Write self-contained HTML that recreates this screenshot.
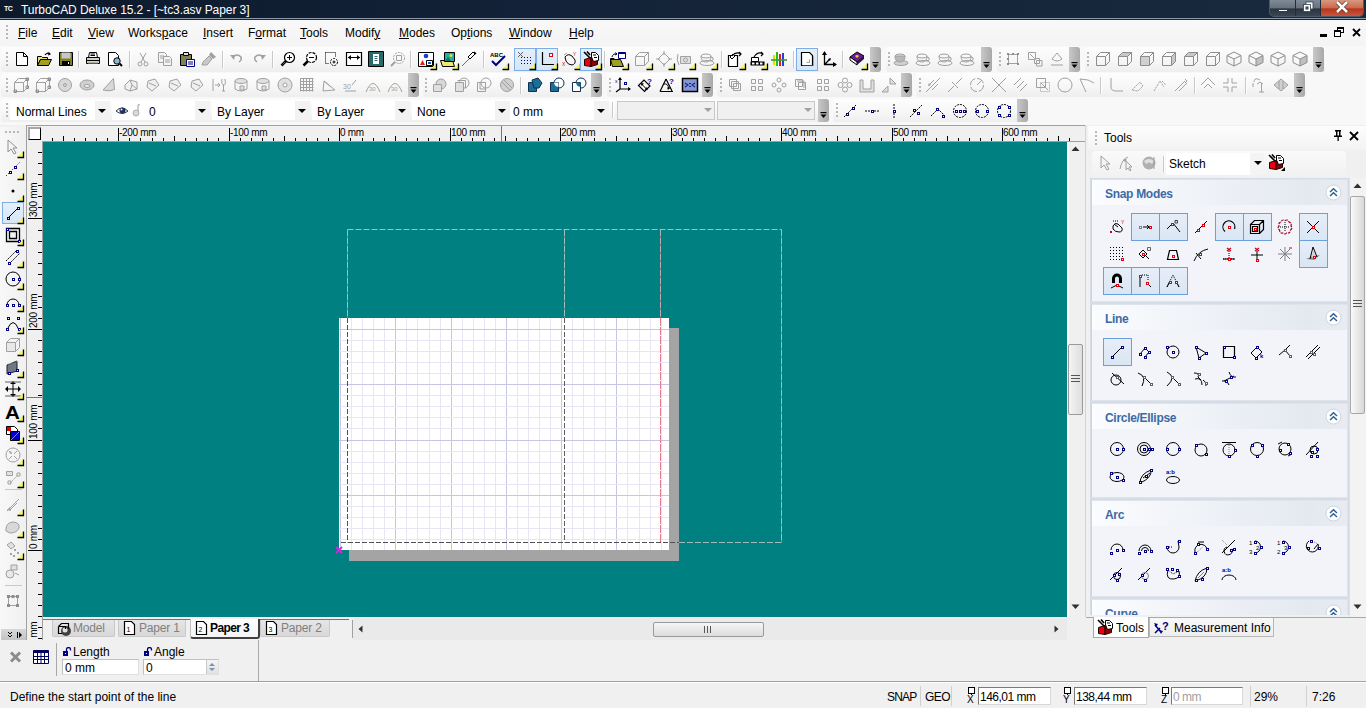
<!DOCTYPE html><html><head><meta charset="utf-8"><style>
html,body{margin:0;padding:0;width:1366px;height:708px;overflow:hidden;background:#f0f0f0;font-family:"Liberation Sans", sans-serif;}
div,svg{box-sizing:border-box;}
u{text-decoration:underline;text-underline-offset:1px;text-decoration-thickness:1px;}
</style></head><body>
<div style="position:absolute;left:0px;top:0px;width:1366px;height:18px;background:linear-gradient(90deg,#0d1a2c 0%,#132238 40%,#16263a 70%,#1a2a3e 100%);"></div>
<div style="position:absolute;left:0px;top:18px;width:1366px;height:1px;background:#8a98a8;"></div>
<div style="position:absolute;left:0px;top:19px;width:1366px;height:1px;background:#1c2633;"></div>
<div style="position:absolute;left:4px;top:5px;font-size:7px;line-height:9px;color:#fff;white-space:nowrap;letter-spacing:-0.5px;line-height:8px;"><b>TC</b></div>
<div style="position:absolute;left:21px;top:3px;font-size:12px;line-height:14px;color:#fff;white-space:nowrap;line-height:15px;letter-spacing:-0.07px;">TurboCAD Deluxe 15.2 - [~tc3.asv Paper 3]</div>
<div style="position:absolute;left:1269px;top:0px;width:95px;height:17px;border:1px solid #4a5868;border-top:none;border-radius:0 0 5px 5px;background:#202c3a;"></div>
<div style="position:absolute;left:1270px;top:0px;width:25px;height:16px;background:linear-gradient(#7e8a96 0%,#66737f 50%,#2a3440 55%,#3a4654 100%);border-radius:0 0 0 4px;"></div>
<div style="position:absolute;left:1296px;top:0px;width:24px;height:16px;background:linear-gradient(#7e8a96 0%,#66737f 50%,#2a3440 55%,#3a4654 100%);"></div>
<div style="position:absolute;left:1321px;top:0px;width:42px;height:16px;background:linear-gradient(#d9977f 0%,#c86a4e 50%,#b8341a 55%,#c6583e 100%);border-radius:0 0 4px 0;"></div>
<div style="position:absolute;left:1278px;top:9px;width:10px;height:3px;background:#fff;border:1px solid #303840;"></div>
<svg style="position:absolute;left:1302px;top:1px;" width="12" height="12" viewBox="0 0 12 12"><rect x="4" y="1" width="7" height="7" fill="#fff" stroke="#304050" stroke-width="0.8"/><rect x="1.5" y="3.5" width="7" height="7" fill="#fff" stroke="#304050" stroke-width="0.8"/><rect x="3.5" y="5.5" width="3" height="3" fill="#3a4654"/></svg>
<svg style="position:absolute;left:1335px;top:1px;" width="14" height="12" viewBox="0 0 14 12"><path d="M2 1 L12 11 M12 1 L2 11" stroke="#5a3020" stroke-width="4"/><path d="M2 1 L12 11 M12 1 L2 11" stroke="#fff" stroke-width="2.6"/></svg>
<div style="position:absolute;left:0px;top:20px;width:1366px;height:26px;background:linear-gradient(#f8f8f8,#f4f4f4);"></div>
<svg style="position:absolute;left:6px;top:25px;" width="2" height="16" viewBox="0 0 2 16"><rect x="0" y="0" width="2" height="2" fill="#b8b8b8"/><rect x="0" y="4" width="2" height="2" fill="#b8b8b8"/><rect x="0" y="8" width="2" height="2" fill="#b8b8b8"/><rect x="0" y="12" width="2" height="2" fill="#b8b8b8"/></svg>
<div style="position:absolute;left:18px;top:26px;font-size:12px;line-height:14px;color:#000;white-space:nowrap;line-height:14px;"><u>F</u>ile</div>
<div style="position:absolute;left:52px;top:26px;font-size:12px;line-height:14px;color:#000;white-space:nowrap;line-height:14px;"><u>E</u>dit</div>
<div style="position:absolute;left:88px;top:26px;font-size:12px;line-height:14px;color:#000;white-space:nowrap;line-height:14px;"><u>V</u>iew</div>
<div style="position:absolute;left:128px;top:26px;font-size:12px;line-height:14px;color:#000;white-space:nowrap;line-height:14px;">Works<u>p</u>ace</div>
<div style="position:absolute;left:203px;top:26px;font-size:12px;line-height:14px;color:#000;white-space:nowrap;line-height:14px;"><u>I</u>nsert</div>
<div style="position:absolute;left:248px;top:26px;font-size:12px;line-height:14px;color:#000;white-space:nowrap;line-height:14px;">F<u>o</u>rmat</div>
<div style="position:absolute;left:300px;top:26px;font-size:12px;line-height:14px;color:#000;white-space:nowrap;line-height:14px;"><u>T</u>ools</div>
<div style="position:absolute;left:345px;top:26px;font-size:12px;line-height:14px;color:#000;white-space:nowrap;line-height:14px;">Modif<u>y</u></div>
<div style="position:absolute;left:399px;top:26px;font-size:12px;line-height:14px;color:#000;white-space:nowrap;line-height:14px;"><u>M</u>odes</div>
<div style="position:absolute;left:451px;top:26px;font-size:12px;line-height:14px;color:#000;white-space:nowrap;line-height:14px;">Op<u>t</u>ions</div>
<div style="position:absolute;left:509px;top:26px;font-size:12px;line-height:14px;color:#000;white-space:nowrap;line-height:14px;"><u>W</u>indow</div>
<div style="position:absolute;left:569px;top:26px;font-size:12px;line-height:14px;color:#000;white-space:nowrap;line-height:14px;"><u>H</u>elp</div>
<div style="position:absolute;left:1320px;top:34px;width:7px;height:3px;background:#000;"></div>
<svg style="position:absolute;left:1334px;top:27px;" width="10" height="10" viewBox="0 0 10 10"><rect x="3.5" y="0.5" width="6" height="5" fill="none" stroke="#000"/><rect x="3.5" y="0.5" width="6" height="1.5" fill="#000"/><rect x="0.5" y="3.5" width="6" height="6" fill="#fff" stroke="#000"/><rect x="0.5" y="3.5" width="6" height="1.5" fill="#000"/></svg>
<svg style="position:absolute;left:1352px;top:28px;" width="9" height="9" viewBox="0 0 9 9"><path d="M1 1 L8 8 M8 1 L1 8" stroke="#000" stroke-width="1.8"/></svg>
<div style="position:absolute;left:0px;top:46px;width:1366px;height:79px;background:#f8f8f8;"></div>
<div style="position:absolute;left:1px;top:47px;width:868px;height:25px;background:linear-gradient(#fdfdfd,#f6f6f6 60%,#eeeeee);border-radius:3px;"></div>
<div style="position:absolute;left:870px;top:47px;width:11px;height:25px;background:linear-gradient(90deg,#c8c8c8,#a8a8a8);border-radius:0 3px 3px 0;"></div>
<svg style="position:absolute;left:872px;top:62px;" width="7" height="7" viewBox="0 0 7 7"><rect x="0.5" y="0" width="6" height="1.2" fill="#000"/><path d="M0.5 2.5 L6.5 2.5 L3.5 6 Z" fill="#000"/></svg>
<div style="position:absolute;left:886px;top:47px;width:106px;height:25px;background:linear-gradient(#fdfdfd,#f6f6f6 60%,#eeeeee);border-radius:3px;"></div>
<div style="position:absolute;left:981px;top:47px;width:11px;height:25px;background:linear-gradient(90deg,#c8c8c8,#a8a8a8);border-radius:0 3px 3px 0;"></div>
<svg style="position:absolute;left:983px;top:62px;" width="7" height="7" viewBox="0 0 7 7"><rect x="0.5" y="0" width="6" height="1.2" fill="#000"/><path d="M0.5 2.5 L6.5 2.5 L3.5 6 Z" fill="#000"/></svg>
<div style="position:absolute;left:997px;top:47px;width:84px;height:25px;background:linear-gradient(#fdfdfd,#f6f6f6 60%,#eeeeee);border-radius:3px;"></div>
<div style="position:absolute;left:1069px;top:47px;width:11px;height:25px;background:linear-gradient(90deg,#c8c8c8,#a8a8a8);border-radius:0 3px 3px 0;"></div>
<svg style="position:absolute;left:1071px;top:62px;" width="7" height="7" viewBox="0 0 7 7"><rect x="0.5" y="0" width="6" height="1.2" fill="#000"/><path d="M0.5 2.5 L6.5 2.5 L3.5 6 Z" fill="#000"/></svg>
<div style="position:absolute;left:1085px;top:47px;width:240px;height:25px;background:linear-gradient(#fdfdfd,#f6f6f6 60%,#eeeeee);border-radius:3px;"></div>
<div style="position:absolute;left:1313px;top:47px;width:11px;height:25px;background:linear-gradient(90deg,#c8c8c8,#a8a8a8);border-radius:0 3px 3px 0;"></div>
<svg style="position:absolute;left:1315px;top:62px;" width="7" height="7" viewBox="0 0 7 7"><rect x="0.5" y="0" width="6" height="1.2" fill="#000"/><path d="M0.5 2.5 L6.5 2.5 L3.5 6 Z" fill="#000"/></svg>
<svg style="position:absolute;left:6px;top:52px;" width="2" height="16" viewBox="0 0 2 16"><rect x="0" y="0" width="2" height="2" fill="#b8b8b8"/><rect x="0" y="4" width="2" height="2" fill="#b8b8b8"/><rect x="0" y="8" width="2" height="2" fill="#b8b8b8"/><rect x="0" y="12" width="2" height="2" fill="#b8b8b8"/></svg>
<svg style="position:absolute;left:888px;top:52px;" width="2" height="16" viewBox="0 0 2 16"><rect x="0" y="0" width="2" height="2" fill="#b8b8b8"/><rect x="0" y="4" width="2" height="2" fill="#b8b8b8"/><rect x="0" y="8" width="2" height="2" fill="#b8b8b8"/><rect x="0" y="12" width="2" height="2" fill="#b8b8b8"/></svg>
<svg style="position:absolute;left:999px;top:52px;" width="2" height="16" viewBox="0 0 2 16"><rect x="0" y="0" width="2" height="2" fill="#b8b8b8"/><rect x="0" y="4" width="2" height="2" fill="#b8b8b8"/><rect x="0" y="8" width="2" height="2" fill="#b8b8b8"/><rect x="0" y="12" width="2" height="2" fill="#b8b8b8"/></svg>
<svg style="position:absolute;left:1087px;top:52px;" width="2" height="16" viewBox="0 0 2 16"><rect x="0" y="0" width="2" height="2" fill="#b8b8b8"/><rect x="0" y="4" width="2" height="2" fill="#b8b8b8"/><rect x="0" y="8" width="2" height="2" fill="#b8b8b8"/><rect x="0" y="12" width="2" height="2" fill="#b8b8b8"/></svg>
<div style="position:absolute;left:1px;top:73px;width:418px;height:24px;background:linear-gradient(#fdfdfd,#f6f6f6 60%,#eeeeee);border-radius:3px;"></div>
<div style="position:absolute;left:408px;top:73px;width:11px;height:24px;background:linear-gradient(90deg,#c8c8c8,#a8a8a8);border-radius:0 3px 3px 0;"></div>
<svg style="position:absolute;left:410px;top:87px;" width="7" height="7" viewBox="0 0 7 7"><rect x="0.5" y="0" width="6" height="1.2" fill="#000"/><path d="M0.5 2.5 L6.5 2.5 L3.5 6 Z" fill="#000"/></svg>
<div style="position:absolute;left:423px;top:73px;width:179px;height:24px;background:linear-gradient(#fdfdfd,#f6f6f6 60%,#eeeeee);border-radius:3px;"></div>
<div style="position:absolute;left:591px;top:73px;width:11px;height:24px;background:linear-gradient(90deg,#c8c8c8,#a8a8a8);border-radius:0 3px 3px 0;"></div>
<svg style="position:absolute;left:593px;top:87px;" width="7" height="7" viewBox="0 0 7 7"><rect x="0.5" y="0" width="6" height="1.2" fill="#000"/><path d="M0.5 2.5 L6.5 2.5 L3.5 6 Z" fill="#000"/></svg>
<div style="position:absolute;left:607px;top:73px;width:106px;height:24px;background:linear-gradient(#fdfdfd,#f6f6f6 60%,#eeeeee);border-radius:3px;"></div>
<div style="position:absolute;left:702px;top:73px;width:11px;height:24px;background:linear-gradient(90deg,#c8c8c8,#a8a8a8);border-radius:0 3px 3px 0;"></div>
<svg style="position:absolute;left:704px;top:87px;" width="7" height="7" viewBox="0 0 7 7"><rect x="0.5" y="0" width="6" height="1.2" fill="#000"/><path d="M0.5 2.5 L6.5 2.5 L3.5 6 Z" fill="#000"/></svg>
<div style="position:absolute;left:717px;top:73px;width:196px;height:24px;background:linear-gradient(#fdfdfd,#f6f6f6 60%,#eeeeee);border-radius:3px;"></div>
<div style="position:absolute;left:901px;top:73px;width:11px;height:24px;background:linear-gradient(90deg,#c8c8c8,#a8a8a8);border-radius:0 3px 3px 0;"></div>
<svg style="position:absolute;left:903px;top:87px;" width="7" height="7" viewBox="0 0 7 7"><rect x="0.5" y="0" width="6" height="1.2" fill="#000"/><path d="M0.5 2.5 L6.5 2.5 L3.5 6 Z" fill="#000"/></svg>
<div style="position:absolute;left:916px;top:73px;width:390px;height:24px;background:linear-gradient(#fdfdfd,#f6f6f6 60%,#eeeeee);border-radius:3px;"></div>
<div style="position:absolute;left:1294px;top:73px;width:11px;height:24px;background:linear-gradient(90deg,#c8c8c8,#a8a8a8);border-radius:0 3px 3px 0;"></div>
<svg style="position:absolute;left:1296px;top:87px;" width="7" height="7" viewBox="0 0 7 7"><rect x="0.5" y="0" width="6" height="1.2" fill="#000"/><path d="M0.5 2.5 L6.5 2.5 L3.5 6 Z" fill="#000"/></svg>
<svg style="position:absolute;left:6px;top:78px;" width="2" height="16" viewBox="0 0 2 16"><rect x="0" y="0" width="2" height="2" fill="#b8b8b8"/><rect x="0" y="4" width="2" height="2" fill="#b8b8b8"/><rect x="0" y="8" width="2" height="2" fill="#b8b8b8"/><rect x="0" y="12" width="2" height="2" fill="#b8b8b8"/></svg>
<svg style="position:absolute;left:425px;top:78px;" width="2" height="16" viewBox="0 0 2 16"><rect x="0" y="0" width="2" height="2" fill="#b8b8b8"/><rect x="0" y="4" width="2" height="2" fill="#b8b8b8"/><rect x="0" y="8" width="2" height="2" fill="#b8b8b8"/><rect x="0" y="12" width="2" height="2" fill="#b8b8b8"/></svg>
<svg style="position:absolute;left:609px;top:78px;" width="2" height="16" viewBox="0 0 2 16"><rect x="0" y="0" width="2" height="2" fill="#b8b8b8"/><rect x="0" y="4" width="2" height="2" fill="#b8b8b8"/><rect x="0" y="8" width="2" height="2" fill="#b8b8b8"/><rect x="0" y="12" width="2" height="2" fill="#b8b8b8"/></svg>
<svg style="position:absolute;left:720px;top:78px;" width="2" height="16" viewBox="0 0 2 16"><rect x="0" y="0" width="2" height="2" fill="#b8b8b8"/><rect x="0" y="4" width="2" height="2" fill="#b8b8b8"/><rect x="0" y="8" width="2" height="2" fill="#b8b8b8"/><rect x="0" y="12" width="2" height="2" fill="#b8b8b8"/></svg>
<svg style="position:absolute;left:919px;top:78px;" width="2" height="16" viewBox="0 0 2 16"><rect x="0" y="0" width="2" height="2" fill="#b8b8b8"/><rect x="0" y="4" width="2" height="2" fill="#b8b8b8"/><rect x="0" y="8" width="2" height="2" fill="#b8b8b8"/><rect x="0" y="12" width="2" height="2" fill="#b8b8b8"/></svg>
<div style="position:absolute;left:1px;top:99px;width:829px;height:23px;background:linear-gradient(#fdfdfd,#f6f6f6 60%,#eeeeee);border-radius:3px;"></div>
<div style="position:absolute;left:818px;top:99px;width:11px;height:23px;background:linear-gradient(90deg,#c8c8c8,#a8a8a8);border-radius:0 3px 3px 0;"></div>
<svg style="position:absolute;left:820px;top:112px;" width="7" height="7" viewBox="0 0 7 7"><rect x="0.5" y="0" width="6" height="1.2" fill="#000"/><path d="M0.5 2.5 L6.5 2.5 L3.5 6 Z" fill="#000"/></svg>
<div style="position:absolute;left:833px;top:99px;width:196px;height:23px;background:linear-gradient(#fdfdfd,#f6f6f6 60%,#eeeeee);border-radius:3px;"></div>
<div style="position:absolute;left:1017px;top:99px;width:11px;height:23px;background:linear-gradient(90deg,#c8c8c8,#a8a8a8);border-radius:0 3px 3px 0;"></div>
<svg style="position:absolute;left:1019px;top:112px;" width="7" height="7" viewBox="0 0 7 7"><rect x="0.5" y="0" width="6" height="1.2" fill="#000"/><path d="M0.5 2.5 L6.5 2.5 L3.5 6 Z" fill="#000"/></svg>
<svg style="position:absolute;left:6px;top:103px;" width="2" height="16" viewBox="0 0 2 16"><rect x="0" y="0" width="2" height="2" fill="#b8b8b8"/><rect x="0" y="4" width="2" height="2" fill="#b8b8b8"/><rect x="0" y="8" width="2" height="2" fill="#b8b8b8"/><rect x="0" y="12" width="2" height="2" fill="#b8b8b8"/></svg>
<svg style="position:absolute;left:836px;top:103px;" width="2" height="16" viewBox="0 0 2 16"><rect x="0" y="0" width="2" height="2" fill="#b8b8b8"/><rect x="0" y="4" width="2" height="2" fill="#b8b8b8"/><rect x="0" y="8" width="2" height="2" fill="#b8b8b8"/><rect x="0" y="12" width="2" height="2" fill="#b8b8b8"/></svg>
<div style="position:absolute;left:78px;top:51px;width:1px;height:17px;background:#c8c8c8;border-right:1px solid #fff;width:2px;"></div>
<div style="position:absolute;left:129px;top:51px;width:1px;height:17px;background:#c8c8c8;border-right:1px solid #fff;width:2px;"></div>
<div style="position:absolute;left:222px;top:51px;width:1px;height:17px;background:#c8c8c8;border-right:1px solid #fff;width:2px;"></div>
<div style="position:absolute;left:272px;top:51px;width:1px;height:17px;background:#c8c8c8;border-right:1px solid #fff;width:2px;"></div>
<div style="position:absolute;left:410px;top:51px;width:1px;height:17px;background:#c8c8c8;border-right:1px solid #fff;width:2px;"></div>
<div style="position:absolute;left:483px;top:51px;width:1px;height:17px;background:#c8c8c8;border-right:1px solid #fff;width:2px;"></div>
<div style="position:absolute;left:604px;top:51px;width:1px;height:17px;background:#c8c8c8;border-right:1px solid #fff;width:2px;"></div>
<div style="position:absolute;left:721px;top:51px;width:1px;height:17px;background:#c8c8c8;border-right:1px solid #fff;width:2px;"></div>
<div style="position:absolute;left:793px;top:51px;width:1px;height:17px;background:#c8c8c8;border-right:1px solid #fff;width:2px;"></div>
<div style="position:absolute;left:842px;top:51px;width:1px;height:17px;background:#c8c8c8;border-right:1px solid #fff;width:2px;"></div>
<div style="position:absolute;left:520px;top:77px;width:1px;height:17px;background:#c8c8c8;border-right:1px solid #fff;width:2px;"></div>
<div style="position:absolute;left:1100px;top:77px;width:1px;height:17px;background:#c8c8c8;border-right:1px solid #fff;width:2px;"></div>
<div style="position:absolute;left:1194px;top:77px;width:1px;height:17px;background:#c8c8c8;border-right:1px solid #fff;width:2px;"></div>
<div style="position:absolute;left:1245px;top:77px;width:1px;height:17px;background:#c8c8c8;border-right:1px solid #fff;width:2px;"></div>
<div style="position:absolute;left:10px;top:101px;width:100px;height:19px;background:#fff;"></div>
<div style="position:absolute;left:95px;top:101px;width:15px;height:19px;background:#f2f2f2;"></div>
<svg style="position:absolute;left:98px;top:109px;" width="8" height="4" viewBox="0 0 8 4"><path d="M0 0 L8 0 L4 4 Z" fill="#000"/></svg>
<div style="position:absolute;left:16px;top:105px;font-size:12px;line-height:14px;color:#000;white-space:nowrap;line-height:14px;">Normal Lines</div>
<div style="position:absolute;left:112px;top:101px;width:98px;height:19px;background:#fff;"></div>
<div style="position:absolute;left:195px;top:101px;width:15px;height:19px;background:#f2f2f2;"></div>
<svg style="position:absolute;left:198px;top:109px;" width="8" height="4" viewBox="0 0 8 4"><path d="M0 0 L8 0 L4 4 Z" fill="#000"/></svg>
<div style="position:absolute;left:149px;top:105px;font-size:12px;line-height:14px;color:#000;white-space:nowrap;line-height:14px;">0</div>
<div style="position:absolute;left:212px;top:101px;width:98px;height:19px;background:#fff;"></div>
<div style="position:absolute;left:295px;top:101px;width:15px;height:19px;background:#f2f2f2;"></div>
<svg style="position:absolute;left:298px;top:109px;" width="8" height="4" viewBox="0 0 8 4"><path d="M0 0 L8 0 L4 4 Z" fill="#000"/></svg>
<div style="position:absolute;left:217px;top:105px;font-size:12px;line-height:14px;color:#000;white-space:nowrap;line-height:14px;">By Layer</div>
<div style="position:absolute;left:312px;top:101px;width:98px;height:19px;background:#fff;"></div>
<div style="position:absolute;left:395px;top:101px;width:15px;height:19px;background:#f2f2f2;"></div>
<svg style="position:absolute;left:398px;top:109px;" width="8" height="4" viewBox="0 0 8 4"><path d="M0 0 L8 0 L4 4 Z" fill="#000"/></svg>
<div style="position:absolute;left:317px;top:105px;font-size:12px;line-height:14px;color:#000;white-space:nowrap;line-height:14px;">By Layer</div>
<div style="position:absolute;left:412px;top:101px;width:98px;height:19px;background:#fff;"></div>
<div style="position:absolute;left:495px;top:101px;width:15px;height:19px;background:#f2f2f2;"></div>
<svg style="position:absolute;left:498px;top:109px;" width="8" height="4" viewBox="0 0 8 4"><path d="M0 0 L8 0 L4 4 Z" fill="#000"/></svg>
<div style="position:absolute;left:417px;top:105px;font-size:12px;line-height:14px;color:#000;white-space:nowrap;line-height:14px;">None</div>
<div style="position:absolute;left:510px;top:101px;width:99px;height:19px;background:#fff;"></div>
<div style="position:absolute;left:594px;top:101px;width:15px;height:19px;background:#f2f2f2;"></div>
<svg style="position:absolute;left:597px;top:109px;" width="8" height="4" viewBox="0 0 8 4"><path d="M0 0 L8 0 L4 4 Z" fill="#000"/></svg>
<div style="position:absolute;left:513px;top:105px;font-size:12px;line-height:14px;color:#000;white-space:nowrap;line-height:14px;">0 mm</div>
<div style="position:absolute;left:612px;top:102px;width:1px;height:16px;background:#c8c8c8;border-right:1px solid #fff;width:2px;"></div>
<div style="position:absolute;left:617px;top:101px;width:98px;height:19px;background:#f0f0f0;border:1px solid #c8c8c8;"></div>
<svg style="position:absolute;left:704px;top:108px;" width="9" height="5" viewBox="0 0 9 5"><path d="M0 0 L8 0 L4 4 Z" fill="#a0a0a0"/></svg>
<div style="position:absolute;left:717px;top:101px;width:98px;height:19px;background:#f0f0f0;border:1px solid #c8c8c8;"></div>
<svg style="position:absolute;left:804px;top:108px;" width="9" height="5" viewBox="0 0 9 5"><path d="M0 0 L8 0 L4 4 Z" fill="#a0a0a0"/></svg>
<div style="position:absolute;left:26px;top:125px;width:1061px;height:516px;border-left:1px solid #a0a0a0;border-top:1px solid #a0a0a0;background:#f0f0f0;"></div>
<div style="position:absolute;left:42px;top:126px;width:1044px;height:15px;background:#f0f0f0;"></div>
<div style="position:absolute;left:42px;top:141px;width:1044px;height:1px;background:#a0a0a0;"></div>
<div style="position:absolute;left:27px;top:142px;width:15px;height:498px;background:#f0f0f0;"></div>
<div style="position:absolute;left:42px;top:141px;width:1px;height:499px;background:#a0a0a0;"></div>
<div style="position:absolute;left:28px;top:127px;width:13px;height:13px;background:#fff;border-left:2px solid #a8a8a8;border-top:2px solid #a8a8a8;border-right:1px solid #000;border-bottom:1px solid #000;"></div>
<div style="position:absolute;left:43px;top:142px;width:1024px;height:475px;background:#008080;"></div>
<svg style="position:absolute;left:42px;top:126px;" width="1044" height="15" viewBox="0 0 1044 15"><rect x="10" y="12" width="1" height="3" fill="#000"/><rect x="21" y="10" width="1" height="5" fill="#000"/><rect x="32" y="12" width="1" height="3" fill="#000"/><rect x="43" y="12" width="1" height="3" fill="#000"/><rect x="54" y="12" width="1" height="3" fill="#000"/><rect x="65" y="12" width="1" height="3" fill="#000"/><rect x="76" y="2" width="1" height="13" fill="#000"/><rect x="87" y="12" width="1" height="3" fill="#000"/><rect x="98" y="12" width="1" height="3" fill="#000"/><rect x="110" y="12" width="1" height="3" fill="#000"/><rect x="121" y="12" width="1" height="3" fill="#000"/><rect x="132" y="10" width="1" height="5" fill="#000"/><rect x="143" y="12" width="1" height="3" fill="#000"/><rect x="154" y="12" width="1" height="3" fill="#000"/><rect x="165" y="12" width="1" height="3" fill="#000"/><rect x="176" y="12" width="1" height="3" fill="#000"/><rect x="187" y="2" width="1" height="13" fill="#000"/><rect x="198" y="12" width="1" height="3" fill="#000"/><rect x="209" y="12" width="1" height="3" fill="#000"/><rect x="220" y="12" width="1" height="3" fill="#000"/><rect x="231" y="12" width="1" height="3" fill="#000"/><rect x="242" y="10" width="1" height="5" fill="#000"/><rect x="253" y="12" width="1" height="3" fill="#000"/><rect x="264" y="12" width="1" height="3" fill="#000"/><rect x="275" y="12" width="1" height="3" fill="#000"/><rect x="286" y="12" width="1" height="3" fill="#000"/><rect x="297" y="2" width="1" height="13" fill="#000"/><rect x="308" y="12" width="1" height="3" fill="#000"/><rect x="320" y="12" width="1" height="3" fill="#000"/><rect x="331" y="12" width="1" height="3" fill="#000"/><rect x="342" y="12" width="1" height="3" fill="#000"/><rect x="353" y="10" width="1" height="5" fill="#000"/><rect x="364" y="12" width="1" height="3" fill="#000"/><rect x="375" y="12" width="1" height="3" fill="#000"/><rect x="386" y="12" width="1" height="3" fill="#000"/><rect x="397" y="12" width="1" height="3" fill="#000"/><rect x="408" y="2" width="1" height="13" fill="#000"/><rect x="419" y="12" width="1" height="3" fill="#000"/><rect x="430" y="12" width="1" height="3" fill="#000"/><rect x="441" y="12" width="1" height="3" fill="#000"/><rect x="452" y="12" width="1" height="3" fill="#000"/><rect x="463" y="10" width="1" height="5" fill="#000"/><rect x="474" y="12" width="1" height="3" fill="#000"/><rect x="485" y="12" width="1" height="3" fill="#000"/><rect x="496" y="12" width="1" height="3" fill="#000"/><rect x="507" y="12" width="1" height="3" fill="#000"/><rect x="518" y="2" width="1" height="13" fill="#000"/><rect x="529" y="12" width="1" height="3" fill="#000"/><rect x="540" y="12" width="1" height="3" fill="#000"/><rect x="552" y="12" width="1" height="3" fill="#000"/><rect x="563" y="12" width="1" height="3" fill="#000"/><rect x="574" y="10" width="1" height="5" fill="#000"/><rect x="585" y="12" width="1" height="3" fill="#000"/><rect x="596" y="12" width="1" height="3" fill="#000"/><rect x="607" y="12" width="1" height="3" fill="#000"/><rect x="618" y="12" width="1" height="3" fill="#000"/><rect x="629" y="2" width="1" height="13" fill="#000"/><rect x="640" y="12" width="1" height="3" fill="#000"/><rect x="651" y="12" width="1" height="3" fill="#000"/><rect x="662" y="12" width="1" height="3" fill="#000"/><rect x="673" y="12" width="1" height="3" fill="#000"/><rect x="684" y="10" width="1" height="5" fill="#000"/><rect x="695" y="12" width="1" height="3" fill="#000"/><rect x="706" y="12" width="1" height="3" fill="#000"/><rect x="717" y="12" width="1" height="3" fill="#000"/><rect x="728" y="12" width="1" height="3" fill="#000"/><rect x="739" y="2" width="1" height="13" fill="#000"/><rect x="750" y="12" width="1" height="3" fill="#000"/><rect x="762" y="12" width="1" height="3" fill="#000"/><rect x="773" y="12" width="1" height="3" fill="#000"/><rect x="784" y="12" width="1" height="3" fill="#000"/><rect x="795" y="10" width="1" height="5" fill="#000"/><rect x="806" y="12" width="1" height="3" fill="#000"/><rect x="817" y="12" width="1" height="3" fill="#000"/><rect x="828" y="12" width="1" height="3" fill="#000"/><rect x="839" y="12" width="1" height="3" fill="#000"/><rect x="850" y="2" width="1" height="13" fill="#000"/><rect x="861" y="12" width="1" height="3" fill="#000"/><rect x="872" y="12" width="1" height="3" fill="#000"/><rect x="883" y="12" width="1" height="3" fill="#000"/><rect x="894" y="12" width="1" height="3" fill="#000"/><rect x="905" y="10" width="1" height="5" fill="#000"/><rect x="916" y="12" width="1" height="3" fill="#000"/><rect x="927" y="12" width="1" height="3" fill="#000"/><rect x="938" y="12" width="1" height="3" fill="#000"/><rect x="949" y="12" width="1" height="3" fill="#000"/><rect x="960" y="2" width="1" height="13" fill="#000"/><rect x="971" y="12" width="1" height="3" fill="#000"/><rect x="982" y="12" width="1" height="3" fill="#000"/><rect x="994" y="12" width="1" height="3" fill="#000"/><rect x="1005" y="12" width="1" height="3" fill="#000"/><rect x="1016" y="10" width="1" height="5" fill="#000"/><rect x="1027" y="12" width="1" height="3" fill="#000"/></svg>
<div style="position:absolute;left:119px;top:127px;font-size:10px;line-height:12px;color:#000;white-space:nowrap;line-height:12px;letter-spacing:-0.3px;">-200 mm</div>
<div style="position:absolute;left:230px;top:127px;font-size:10px;line-height:12px;color:#000;white-space:nowrap;line-height:12px;letter-spacing:-0.3px;">-100 mm</div>
<div style="position:absolute;left:340px;top:127px;font-size:10px;line-height:12px;color:#000;white-space:nowrap;line-height:12px;letter-spacing:-0.3px;">0 mm</div>
<div style="position:absolute;left:451px;top:127px;font-size:10px;line-height:12px;color:#000;white-space:nowrap;line-height:12px;letter-spacing:-0.3px;">100 mm</div>
<div style="position:absolute;left:561px;top:127px;font-size:10px;line-height:12px;color:#000;white-space:nowrap;line-height:12px;letter-spacing:-0.3px;">200 mm</div>
<div style="position:absolute;left:672px;top:127px;font-size:10px;line-height:12px;color:#000;white-space:nowrap;line-height:12px;letter-spacing:-0.3px;">300 mm</div>
<div style="position:absolute;left:782px;top:127px;font-size:10px;line-height:12px;color:#000;white-space:nowrap;line-height:12px;letter-spacing:-0.3px;">400 mm</div>
<div style="position:absolute;left:893px;top:127px;font-size:10px;line-height:12px;color:#000;white-space:nowrap;line-height:12px;letter-spacing:-0.3px;">500 mm</div>
<div style="position:absolute;left:1003px;top:127px;font-size:10px;line-height:12px;color:#000;white-space:nowrap;line-height:12px;letter-spacing:-0.3px;">600 mm</div>
<div style="position:absolute;left:501px;top:126px;width:1px;height:16px;background:#c040c0;"></div>
<svg style="position:absolute;left:27px;top:142px;" width="15" height="498" viewBox="0 0 15 498"><rect x="11" y="496" width="4" height="1" fill="#000"/><rect x="11" y="485" width="4" height="1" fill="#000"/><rect x="11" y="474" width="4" height="1" fill="#000"/><rect x="11" y="463" width="4" height="1" fill="#000"/><rect x="11" y="452" width="4" height="1" fill="#000"/><rect x="11" y="441" width="4" height="1" fill="#000"/><rect x="11" y="430" width="4" height="1" fill="#000"/><rect x="11" y="419" width="4" height="1" fill="#000"/><rect x="1" y="408" width="14" height="1" fill="#000"/><rect x="11" y="397" width="4" height="1" fill="#000"/><rect x="11" y="386" width="4" height="1" fill="#000"/><rect x="11" y="375" width="4" height="1" fill="#000"/><rect x="11" y="364" width="4" height="1" fill="#000"/><rect x="11" y="353" width="4" height="1" fill="#000"/><rect x="11" y="342" width="4" height="1" fill="#000"/><rect x="11" y="331" width="4" height="1" fill="#000"/><rect x="11" y="320" width="4" height="1" fill="#000"/><rect x="11" y="309" width="4" height="1" fill="#000"/><rect x="1" y="298" width="14" height="1" fill="#000"/><rect x="11" y="286" width="4" height="1" fill="#000"/><rect x="11" y="275" width="4" height="1" fill="#000"/><rect x="11" y="264" width="4" height="1" fill="#000"/><rect x="11" y="253" width="4" height="1" fill="#000"/><rect x="11" y="242" width="4" height="1" fill="#000"/><rect x="11" y="231" width="4" height="1" fill="#000"/><rect x="11" y="220" width="4" height="1" fill="#000"/><rect x="11" y="209" width="4" height="1" fill="#000"/><rect x="11" y="198" width="4" height="1" fill="#000"/><rect x="1" y="187" width="14" height="1" fill="#000"/><rect x="11" y="176" width="4" height="1" fill="#000"/><rect x="11" y="165" width="4" height="1" fill="#000"/><rect x="11" y="154" width="4" height="1" fill="#000"/><rect x="11" y="143" width="4" height="1" fill="#000"/><rect x="11" y="132" width="4" height="1" fill="#000"/><rect x="11" y="121" width="4" height="1" fill="#000"/><rect x="11" y="110" width="4" height="1" fill="#000"/><rect x="11" y="99" width="4" height="1" fill="#000"/><rect x="11" y="88" width="4" height="1" fill="#000"/><rect x="1" y="76" width="14" height="1" fill="#000"/><rect x="11" y="65" width="4" height="1" fill="#000"/><rect x="11" y="54" width="4" height="1" fill="#000"/><rect x="11" y="43" width="4" height="1" fill="#000"/><rect x="11" y="32" width="4" height="1" fill="#000"/><rect x="11" y="21" width="4" height="1" fill="#000"/><rect x="11" y="10" width="4" height="1" fill="#000"/></svg>
<div style="position:absolute;left:27px;top:142px;width:15px;height:498px;overflow:hidden;">
<div style="position:absolute;left:1px;top:517px;width:0;height:0;"><div style="position:absolute;left:0;top:0;transform-origin:0 0;transform:rotate(-90deg);font-size:10px;line-height:11px;white-space:nowrap;color:#000;letter-spacing:-0.3px;">-100 mm</div></div>
<div style="position:absolute;left:1px;top:407px;width:0;height:0;"><div style="position:absolute;left:0;top:0;transform-origin:0 0;transform:rotate(-90deg);font-size:10px;line-height:11px;white-space:nowrap;color:#000;letter-spacing:-0.3px;">0 mm</div></div>
<div style="position:absolute;left:1px;top:297px;width:0;height:0;"><div style="position:absolute;left:0;top:0;transform-origin:0 0;transform:rotate(-90deg);font-size:10px;line-height:11px;white-space:nowrap;color:#000;letter-spacing:-0.3px;">100 mm</div></div>
<div style="position:absolute;left:1px;top:186px;width:0;height:0;"><div style="position:absolute;left:0;top:0;transform-origin:0 0;transform:rotate(-90deg);font-size:10px;line-height:11px;white-space:nowrap;color:#000;letter-spacing:-0.3px;">200 mm</div></div>
<div style="position:absolute;left:1px;top:75px;width:0;height:0;"><div style="position:absolute;left:0;top:0;transform-origin:0 0;transform:rotate(-90deg);font-size:10px;line-height:11px;white-space:nowrap;color:#000;letter-spacing:-0.3px;">300 mm</div></div>
</div>
<div style="position:absolute;left:27px;top:397px;width:15px;height:1px;background:#c040c0;"></div>
<div style="position:absolute;left:1067px;top:142px;width:19px;height:475px;background:#f0f0f0;border-left:2px solid #fafafa;"></div>
<svg style="position:absolute;left:1071px;top:146px;" width="9" height="6" viewBox="0 0 9 6"><path d="M0.5 5 L8.5 5 L4.5 0.5 Z" fill="#303030"/></svg>
<svg style="position:absolute;left:1071px;top:604px;" width="9" height="6" viewBox="0 0 9 6"><path d="M0.5 0.5 L8.5 0.5 L4.5 5 Z" fill="#303030"/></svg>
<div style="position:absolute;left:1068px;top:344px;width:15px;height:71px;background:linear-gradient(90deg,#f4f4f4,#dedede);border:1px solid #9a9a9a;border-radius:2px;"></div>
<svg style="position:absolute;left:1071px;top:375px;" width="9" height="7" viewBox="0 0 9 7"><rect x="0" y="0" width="9" height="1" fill="#555"/><rect x="0" y="3" width="9" height="1" fill="#555"/><rect x="0" y="6" width="9" height="1" fill="#555"/></svg>
<div style="position:absolute;left:349px;top:328px;width:330px;height:233px;background:#a4a4a4;"></div>
<div style="position:absolute;left:339px;top:318px;width:330px;height:232px;background:#fff;"></div>
<svg style="position:absolute;left:339px;top:318px;" width="330" height="232" viewBox="0 0 330 232"><rect x="1" y="0" width="1" height="232" fill="#c6c6e2"/><rect x="12" y="0" width="1" height="232" fill="#e6e6f6"/><rect x="23" y="0" width="1" height="232" fill="#e6e6f6"/><rect x="34" y="0" width="1" height="232" fill="#e6e6f6"/><rect x="45" y="0" width="1" height="232" fill="#e6e6f6"/><rect x="56" y="0" width="1" height="232" fill="#c6c6e2"/><rect x="67" y="0" width="1" height="232" fill="#e6e6f6"/><rect x="78" y="0" width="1" height="232" fill="#e6e6f6"/><rect x="90" y="0" width="1" height="232" fill="#e6e6f6"/><rect x="101" y="0" width="1" height="232" fill="#e6e6f6"/><rect x="112" y="0" width="1" height="232" fill="#c6c6e2"/><rect x="123" y="0" width="1" height="232" fill="#e6e6f6"/><rect x="134" y="0" width="1" height="232" fill="#e6e6f6"/><rect x="145" y="0" width="1" height="232" fill="#e6e6f6"/><rect x="156" y="0" width="1" height="232" fill="#e6e6f6"/><rect x="167" y="0" width="1" height="232" fill="#c6c6e2"/><rect x="178" y="0" width="1" height="232" fill="#e6e6f6"/><rect x="189" y="0" width="1" height="232" fill="#e6e6f6"/><rect x="200" y="0" width="1" height="232" fill="#e6e6f6"/><rect x="211" y="0" width="1" height="232" fill="#e6e6f6"/><rect x="222" y="0" width="1" height="232" fill="#c6c6e2"/><rect x="233" y="0" width="1" height="232" fill="#e6e6f6"/><rect x="244" y="0" width="1" height="232" fill="#e6e6f6"/><rect x="255" y="0" width="1" height="232" fill="#e6e6f6"/><rect x="266" y="0" width="1" height="232" fill="#e6e6f6"/><rect x="277" y="0" width="1" height="232" fill="#c6c6e2"/><rect x="288" y="0" width="1" height="232" fill="#e6e6f6"/><rect x="300" y="0" width="1" height="232" fill="#e6e6f6"/><rect x="311" y="0" width="1" height="232" fill="#e6e6f6"/><rect x="322" y="0" width="1" height="232" fill="#e6e6f6"/><rect x="0" y="232" width="330" height="1" fill="#c6c6e2"/><rect x="0" y="221" width="330" height="1" fill="#e6e6f6"/><rect x="0" y="210" width="330" height="1" fill="#e6e6f6"/><rect x="0" y="199" width="330" height="1" fill="#e6e6f6"/><rect x="0" y="188" width="330" height="1" fill="#e6e6f6"/><rect x="0" y="177" width="330" height="1" fill="#c6c6e2"/><rect x="0" y="166" width="330" height="1" fill="#e6e6f6"/><rect x="0" y="155" width="330" height="1" fill="#e6e6f6"/><rect x="0" y="144" width="330" height="1" fill="#e6e6f6"/><rect x="0" y="133" width="330" height="1" fill="#e6e6f6"/><rect x="0" y="122" width="330" height="1" fill="#c6c6e2"/><rect x="0" y="110" width="330" height="1" fill="#e6e6f6"/><rect x="0" y="99" width="330" height="1" fill="#e6e6f6"/><rect x="0" y="88" width="330" height="1" fill="#e6e6f6"/><rect x="0" y="77" width="330" height="1" fill="#e6e6f6"/><rect x="0" y="66" width="330" height="1" fill="#c6c6e2"/><rect x="0" y="55" width="330" height="1" fill="#e6e6f6"/><rect x="0" y="44" width="330" height="1" fill="#e6e6f6"/><rect x="0" y="33" width="330" height="1" fill="#e6e6f6"/><rect x="0" y="22" width="330" height="1" fill="#e6e6f6"/><rect x="0" y="11" width="330" height="1" fill="#c6c6e2"/></svg>
<svg style="position:absolute;left:43px;top:142px;" width="1024" height="475" viewBox="0 0 1024 475"><line x1="304.5" y1="87.5" x2="738.5" y2="87.5" stroke="#a4bcbc" stroke-width="1" stroke-dasharray="6,2"/><line x1="304.5" y1="87.5" x2="304.5" y2="176" stroke="#a4bcbc" stroke-width="1" stroke-dasharray="7,1"/><line x1="521.5" y1="87.5" x2="521.5" y2="176" stroke="#a4bcbc" stroke-width="1" stroke-dasharray="7,1"/><line x1="617.5" y1="87.5" x2="617.5" y2="176" stroke="#c0a8b0" stroke-width="1" stroke-dasharray="7,1"/><line x1="738.5" y1="87.5" x2="738.5" y2="400.5" stroke="#a4bcbc" stroke-width="1" stroke-dasharray="7,1"/><line x1="636" y1="400.5" x2="738.5" y2="400.5" stroke="#a4bcbc" stroke-width="1" stroke-dasharray="6,2"/><line x1="304.5" y1="176" x2="304.5" y2="400.5" stroke="#505050" stroke-width="1" stroke-dasharray="5,2"/><line x1="521.5" y1="176" x2="521.5" y2="400.5" stroke="#606060" stroke-width="1" stroke-dasharray="5,2"/><line x1="617.5" y1="176" x2="617.5" y2="400.5" stroke="#e87890" stroke-width="1" stroke-dasharray="8,1"/><line x1="298" y1="400.5" x2="636" y2="400.5" stroke="#505050" stroke-width="1" stroke-dasharray="5,2"/><path d="M293 405 L299 411 M299 405 L293 411" stroke="#e020e0" stroke-width="2"/></svg>
<div style="position:absolute;left:43px;top:617px;width:1024px;height:23px;background:#f0f0f0;"></div>
<div style="position:absolute;left:43px;top:617px;width:310px;height:2px;background:#f4eef0;"></div>
<div style="position:absolute;left:43px;top:619px;width:306px;height:1px;background:#707070;"></div>
<div style="position:absolute;left:52px;top:620px;width:63px;height:17px;background:linear-gradient(#e6e6e6,#d8d8d8);border:1px solid #c8c8c8;border-top:none;border-radius:0 0 2px 2px;"></div>
<div style="position:absolute;left:73px;top:621px;font-size:12px;line-height:14px;color:#808080;white-space:nowrap;line-height:14px;letter-spacing:-0.2px;">Model</div>
<div style="position:absolute;left:118px;top:620px;width:68px;height:17px;background:linear-gradient(#e6e6e6,#d8d8d8);border:1px solid #c8c8c8;border-top:none;border-radius:0 0 2px 2px;"></div>
<div style="position:absolute;left:139px;top:621px;font-size:12px;line-height:14px;color:#808080;white-space:nowrap;line-height:14px;letter-spacing:-0.2px;">Paper 1</div>
<div style="position:absolute;left:190px;top:619px;width:70px;height:20px;background:linear-gradient(#fdfdfd,#f4f4f4);border-left:1px solid #c0c0c0;border-right:2px solid #404040;border-bottom:2px solid #404040;border-radius:0 0 3px 3px;"></div>
<div style="position:absolute;left:210px;top:621px;font-size:12px;line-height:14px;color:#000;white-space:nowrap;font-weight:bold;line-height:14px;letter-spacing:-0.6px;">Paper 3</div>
<div style="position:absolute;left:260px;top:620px;width:70px;height:17px;background:linear-gradient(#e6e6e6,#d8d8d8);border:1px solid #c8c8c8;border-top:none;border-radius:0 0 2px 2px;"></div>
<div style="position:absolute;left:281px;top:621px;font-size:12px;line-height:14px;color:#808080;white-space:nowrap;line-height:14px;letter-spacing:-0.2px;">Paper 2</div>
<div style="position:absolute;left:352px;top:620px;width:1px;height:18px;background:#a0a0a0;"></div>
<div style="position:absolute;left:353px;top:618px;width:714px;height:22px;background:#eaeaea;"></div>
<svg style="position:absolute;left:358px;top:625px;" width="5" height="8" viewBox="0 0 5 8"><path d="M4.5 0.5 L4.5 7.5 L0.5 4 Z" fill="#303030"/></svg>
<svg style="position:absolute;left:1054px;top:625px;" width="5" height="8" viewBox="0 0 5 8"><path d="M0.5 0.5 L0.5 7.5 L4.5 4 Z" fill="#303030"/></svg>
<div style="position:absolute;left:653px;top:622px;width:111px;height:15px;background:linear-gradient(#f6f6f6,#dcdcdc);border:1px solid #9a9a9a;border-radius:2px;"></div>
<svg style="position:absolute;left:704px;top:626px;" width="7" height="8" viewBox="0 0 7 8"><rect x="0" y="0" width="1" height="7" fill="#555"/><rect x="3" y="0" width="1" height="7" fill="#555"/><rect x="6" y="0" width="1" height="7" fill="#555"/></svg>
<div style="position:absolute;left:1067px;top:617px;width:19px;height:23px;background:#f0f0f0;"></div>
<div style="position:absolute;left:0px;top:640px;width:1088px;height:42px;background:#f0f0f0;"></div>
<div style="position:absolute;left:0px;top:681px;width:1366px;height:1px;background:#a0a0a0;"></div>
<div style="position:absolute;left:0px;top:682px;width:1366px;height:1px;background:#fff;"></div>
<div style="position:absolute;left:56px;top:643px;width:1px;height:33px;background:#a8a8a8;"></div>
<div style="position:absolute;left:258px;top:640px;width:1px;height:41px;background:#a8a8a8;"></div>
<div style="position:absolute;left:0px;top:683px;width:1366px;height:25px;background:#f0f0f0;"></div>
<div style="position:absolute;left:10px;top:690px;font-size:12px;line-height:14px;color:#000;white-space:nowrap;line-height:14px;">Define the start point of the line</div>
<div style="position:absolute;left:1086px;top:125px;width:280px;height:515px;background:#f0f0f0;"></div>
<div style="position:absolute;left:1085px;top:125px;width:1px;height:492px;background:#d4d4d4;"></div>
<div style="position:absolute;left:1088px;top:126px;width:278px;height:24px;background:linear-gradient(#fdfdfd,#f3f3f3);"></div>
<svg style="position:absolute;left:1095px;top:131px;" width="2" height="16" viewBox="0 0 2 16"><rect x="0" y="0" width="2" height="2" fill="#b8b8b8"/><rect x="0" y="4" width="2" height="2" fill="#b8b8b8"/><rect x="0" y="8" width="2" height="2" fill="#b8b8b8"/><rect x="0" y="12" width="2" height="2" fill="#b8b8b8"/></svg>
<div style="position:absolute;left:1104px;top:131px;font-size:12px;line-height:14px;color:#000;white-space:nowrap;line-height:14px;">Tools</div>
<svg style="position:absolute;left:1333px;top:130px;" width="10" height="11" viewBox="0 0 10 11"><rect x="2" y="0" width="6" height="1.5" fill="#000"/><rect x="3" y="0" width="1.5" height="6" fill="#000"/><rect x="6" y="0" width="1.5" height="6" fill="#000"/><rect x="1" y="5.5" width="8" height="1.5" fill="#000"/><rect x="4.5" y="6" width="1.3" height="5" fill="#000"/></svg>
<svg style="position:absolute;left:1349px;top:131px;" width="10" height="10" viewBox="0 0 10 10"><path d="M1 1 L9 9 M9 1 L1 9" stroke="#000" stroke-width="1.8"/></svg>
<div style="position:absolute;left:1092px;top:151px;width:254px;height:26px;background:linear-gradient(#fafafa,#f1f1f1);border-radius:3px;"></div>
<div style="position:absolute;left:1163px;top:156px;width:1px;height:16px;background:#c8c8c8;border-right:1px solid #fff;width:2px;"></div>
<div style="position:absolute;left:1166px;top:153px;width:98px;height:22px;background:#fff;"></div>
<div style="position:absolute;left:1250px;top:153px;width:14px;height:22px;background:#f4f4f4;"></div>
<div style="position:absolute;left:1169px;top:157px;font-size:12px;line-height:14px;color:#000;white-space:nowrap;line-height:14px;">Sketch</div>
<svg style="position:absolute;left:1254px;top:161px;" width="8" height="4" viewBox="0 0 8 4"><path d="M0 0 L8 0 L4 4 Z" fill="#000"/></svg>
<div style="position:absolute;left:1088px;top:178px;width:262px;height:437px;overflow:hidden;">
<div style="position:absolute;left:2px;top:0;width:259px;height:437px;background:#d5dce6;"></div>
<div style="position:absolute;left:3px;top:1px;width:257px;height:123px;background:#f2f4f9;border:1px solid #dfe4ec;border-left-color:#cdd4de;"></div>
<div style="position:absolute;left:4px;top:2px;width:255px;height:25px;background:linear-gradient(90deg,#fbfcfe 0%,#f0f3f8 40%,#e4e9f0 85%,#e8ecf2 100%);"></div>
<div style="position:absolute;left:17px;top:9px;font-size:12px;line-height:14px;font-weight:bold;color:#3b6ba6;white-space:nowrap;letter-spacing:-0.3px;">Snap Modes</div>
<svg style="position:absolute;left:237px;top:6px;" width="17" height="17" viewBox="0 0 17 17"><circle cx="8.5" cy="8.5" r="7.5" fill="#fff" stroke="#ccd4de"/><path d="M5 8 L8.5 4.8 L12 8 M5 12 L8.5 8.8 L12 12" fill="none" stroke="#2e5f96" stroke-width="1.5"/></svg>
<div style="position:absolute;left:3px;top:126px;width:257px;height:97px;background:#f2f4f9;border:1px solid #dfe4ec;border-left-color:#cdd4de;"></div>
<div style="position:absolute;left:4px;top:127px;width:255px;height:25px;background:linear-gradient(90deg,#fbfcfe 0%,#f0f3f8 40%,#e4e9f0 85%,#e8ecf2 100%);"></div>
<div style="position:absolute;left:17px;top:134px;font-size:12px;line-height:14px;font-weight:bold;color:#3b6ba6;white-space:nowrap;letter-spacing:-0.3px;">Line</div>
<svg style="position:absolute;left:237px;top:131px;" width="17" height="17" viewBox="0 0 17 17"><circle cx="8.5" cy="8.5" r="7.5" fill="#fff" stroke="#ccd4de"/><path d="M5 8 L8.5 4.8 L12 8 M5 12 L8.5 8.8 L12 12" fill="none" stroke="#2e5f96" stroke-width="1.5"/></svg>
<div style="position:absolute;left:3px;top:225px;width:257px;height:95px;background:#f2f4f9;border:1px solid #dfe4ec;border-left-color:#cdd4de;"></div>
<div style="position:absolute;left:4px;top:226px;width:255px;height:25px;background:linear-gradient(90deg,#fbfcfe 0%,#f0f3f8 40%,#e4e9f0 85%,#e8ecf2 100%);"></div>
<div style="position:absolute;left:17px;top:233px;font-size:12px;line-height:14px;font-weight:bold;color:#3b6ba6;white-space:nowrap;letter-spacing:-0.3px;">Circle/Ellipse</div>
<svg style="position:absolute;left:237px;top:230px;" width="17" height="17" viewBox="0 0 17 17"><circle cx="8.5" cy="8.5" r="7.5" fill="#fff" stroke="#ccd4de"/><path d="M5 8 L8.5 4.8 L12 8 M5 12 L8.5 8.8 L12 12" fill="none" stroke="#2e5f96" stroke-width="1.5"/></svg>
<div style="position:absolute;left:3px;top:322px;width:257px;height:97px;background:#f2f4f9;border:1px solid #dfe4ec;border-left-color:#cdd4de;"></div>
<div style="position:absolute;left:4px;top:323px;width:255px;height:25px;background:linear-gradient(90deg,#fbfcfe 0%,#f0f3f8 40%,#e4e9f0 85%,#e8ecf2 100%);"></div>
<div style="position:absolute;left:17px;top:330px;font-size:12px;line-height:14px;font-weight:bold;color:#3b6ba6;white-space:nowrap;letter-spacing:-0.3px;">Arc</div>
<svg style="position:absolute;left:237px;top:327px;" width="17" height="17" viewBox="0 0 17 17"><circle cx="8.5" cy="8.5" r="7.5" fill="#fff" stroke="#ccd4de"/><path d="M5 8 L8.5 4.8 L12 8 M5 12 L8.5 8.8 L12 12" fill="none" stroke="#2e5f96" stroke-width="1.5"/></svg>
<div style="position:absolute;left:3px;top:421px;width:257px;height:60px;background:#f2f4f9;border:1px solid #dfe4ec;border-left-color:#cdd4de;"></div>
<div style="position:absolute;left:4px;top:422px;width:255px;height:25px;background:linear-gradient(90deg,#fbfcfe 0%,#f0f3f8 40%,#e4e9f0 85%,#e8ecf2 100%);"></div>
<div style="position:absolute;left:17px;top:429px;font-size:12px;line-height:14px;font-weight:bold;color:#3b6ba6;white-space:nowrap;letter-spacing:-0.3px;">Curve</div>
<svg style="position:absolute;left:237px;top:426px;" width="17" height="17" viewBox="0 0 17 17"><circle cx="8.5" cy="8.5" r="7.5" fill="#fff" stroke="#ccd4de"/><path d="M5 8 L8.5 4.8 L12 8 M5 12 L8.5 8.8 L12 12" fill="none" stroke="#2e5f96" stroke-width="1.5"/></svg>
</div>
<div style="position:absolute;left:1349px;top:178px;width:17px;height:439px;background:#f3f3f3;border-left:1px solid #e0e0e0;"></div>
<svg style="position:absolute;left:1353px;top:183px;" width="9" height="6" viewBox="0 0 9 6"><path d="M0.5 5 L8.5 5 L4.5 0.5 Z" fill="#303030"/></svg>
<svg style="position:absolute;left:1353px;top:604px;" width="9" height="6" viewBox="0 0 9 6"><path d="M0.5 0.5 L8.5 0.5 L4.5 5 Z" fill="#303030"/></svg>
<div style="position:absolute;left:1350px;top:196px;width:15px;height:218px;background:linear-gradient(90deg,#fafafa,#d8d8d8);border:1px solid #a8a8a8;border-radius:2px;"></div>
<svg style="position:absolute;left:1353px;top:300px;" width="9" height="7" viewBox="0 0 9 7"><rect x="0" y="0" width="9" height="1" fill="#555"/><rect x="0" y="3" width="9" height="1" fill="#555"/><rect x="0" y="6" width="9" height="1" fill="#555"/></svg>
<div style="position:absolute;left:1086px;top:617px;width:280px;height:23px;background:#f0f0f0;"></div>
<div style="position:absolute;left:1086px;top:617px;width:280px;height:1px;background:#a8a8a8;"></div>
<div style="position:absolute;left:1093px;top:617px;width:56px;height:21px;background:#fff;border:1px solid #a8a8a8;border-top:none;"></div>
<div style="position:absolute;left:1116px;top:621px;font-size:12px;line-height:14px;color:#000;white-space:nowrap;line-height:14px;">Tools</div>
<div style="position:absolute;left:1149px;top:618px;width:125px;height:19px;background:linear-gradient(#f8f8f8,#eeeeee);border:1px solid #b8b8b8;border-top:none;"></div>
<div style="position:absolute;left:1174px;top:621px;font-size:12px;line-height:14px;color:#000;white-space:nowrap;line-height:14px;">Measurement Info</div>
<svg style="position:absolute;left:14px;top:51px;overflow:visible;" width="20" height="20" viewBox="0 0 20 20"><path d="M2.5 1.5 H9.5 L13.5 5.5 V14.5 H2.5 Z" fill="#fff" stroke="#000"/><path d="M9.5 1.5 V5.5 H13.5" fill="none" stroke="#000" stroke-width="1" /></svg>
<svg style="position:absolute;left:36px;top:51px;overflow:visible;" width="20" height="20" viewBox="0 0 20 20"><path d="M1.5 5.5 H5.5 L6.5 6.5 H11.5 V8.5 H4.5 L1.5 14.5 Z" fill="#e8e070" stroke="#000"/><path d="M4.5 8.5 H15.5 L12.5 14.5 H1.5 Z" fill="#a0a020" stroke="#000"/><path d="M9 4 Q11 1 14 3 M12.5 1.5 L14 3 L12 4" fill="none" stroke="#000" stroke-width="1.2" /></svg>
<svg style="position:absolute;left:58px;top:51px;overflow:visible;" width="20" height="20" viewBox="0 0 20 20"><path d="M1.5 1.5 H14.5 V14.5 H1.5 Z" fill="#808020" stroke="#000"/><path d="M3.5 1.5 H12.5 V7.5 H3.5 Z" fill="#c8c8c8" /><path d="M4 10 H12 V14 H4Z" fill="#000" /><path d="M10 11 H11 V13 H10Z" fill="#fff" /></svg>
<svg style="position:absolute;left:85px;top:51px;overflow:visible;" width="20" height="20" viewBox="0 0 20 20"><path d="M4.5 1.5 H11.5 L12.5 6.5 H3.5 Z" fill="#fff" stroke="#000"/><path d="M1.5 6.5 H14.5 V12.5 H1.5 Z" fill="#d0d0d0" stroke="#000"/><path d="M2 9 H14 V10 H2Z" fill="#000" /><path d="M3 11 H13 V12.5 H3Z" fill="#b0b0a0" /><path d="M5.5 3 H10 M5.5 4.5 H10" fill="none" stroke="#000" stroke-width="1" /></svg>
<svg style="position:absolute;left:107px;top:51px;overflow:visible;" width="20" height="20" viewBox="0 0 20 20"><path d="M1.5 1.5 H8.5 L11.5 4.5 V14.5 H1.5 Z" fill="#fff" stroke="#000"/><circle cx="10" cy="10" r="3.2" fill="#90b8c8" stroke="#000"/><path d="M12.5 12.5 L15 15" fill="none" stroke="#000" stroke-width="2" /></svg>
<svg style="position:absolute;left:135px;top:51px;overflow:visible;" width="20" height="20" viewBox="0 0 20 20"><path d="M5 2 L10 11 M11 2 L6 11" fill="none" stroke="#a0a0a0" stroke-width="1" /><circle cx="5" cy="13" r="2" fill="none" stroke="#a0a0a0"/><circle cx="11" cy="13" r="2" fill="none" stroke="#a0a0a0"/></svg>
<svg style="position:absolute;left:157px;top:51px;overflow:visible;" width="20" height="20" viewBox="0 0 20 20"><path d="M1.5 1.5 H7.5 L9.5 3.5 V11.5 H1.5Z" fill="#f4f4f4" stroke="#a0a0a0"/><path d="M6.5 5.5 H12.5 L14.5 7.5 V14.5 H6.5Z" fill="#f4f4f4" stroke="#a0a0a0"/><path d="M3 5 H7 M3 7 H7 M8 9 H13 M8 11 H13" fill="none" stroke="#a0a0a0" stroke-width="1" /></svg>
<svg style="position:absolute;left:179px;top:51px;overflow:visible;" width="20" height="20" viewBox="0 0 20 20"><path d="M1.5 3.5 H12.5 V14.5 H1.5Z" fill="#808050" stroke="#000"/><path d="M4.5 1.5 H9.5 V4.5 H4.5Z" fill="#e0e0e0" stroke="#000"/><path d="M7.5 8.5 H15.5 V15.5 H7.5Z" fill="#fff" stroke="#000080"/><path d="M9 11 H14 M9 13 H14" fill="none" stroke="#000080" stroke-width="1" /></svg>
<svg style="position:absolute;left:201px;top:51px;overflow:visible;" width="20" height="20" viewBox="0 0 20 20"><path d="M10 1 L15 6 L12 8 L8 4Z" fill="#a0a0a0" /><path d="M8 5 L11 8 L6 14 L1 14 L2 11Z" fill="#c8c8c8" stroke="#a0a0a0"/></svg>
<svg style="position:absolute;left:229px;top:51px;overflow:visible;" width="20" height="20" viewBox="0 0 20 20"><path d="M4 6 Q8 2 12 6 Q13 9 10 11" fill="none" stroke="#a0a0a0" stroke-width="1.5" /><path d="M1 4 L6 4 L5 9Z" fill="#a0a0a0" /></svg>
<svg style="position:absolute;left:251px;top:51px;overflow:visible;" width="20" height="20" viewBox="0 0 20 20"><path d="M12 6 Q8 2 4 6 Q3 9 6 11" fill="none" stroke="#a0a0a0" stroke-width="1.5" /><path d="M15 4 L10 4 L11 9Z" fill="#a0a0a0" /></svg>
<svg style="position:absolute;left:280px;top:51px;overflow:visible;" width="20" height="20" viewBox="0 0 20 20"><circle cx="9.5" cy="6.5" r="5" fill="#fff" stroke="#000" stroke-width="1.2"/><path d="M7 6.5 H12 M9.5 4 V9" fill="none" stroke="#000" stroke-width="1" /><path d="M6 10 L1.5 14.5" fill="none" stroke="#000" stroke-width="2.5" /><path d="M5 11 L2.5 13.5" fill="none" stroke="#606060" stroke-width="1" /></svg>
<svg style="position:absolute;left:302px;top:51px;overflow:visible;" width="20" height="20" viewBox="0 0 20 20"><circle cx="9.5" cy="6.5" r="5" fill="#fff" stroke="#000" stroke-width="1.2" stroke-dasharray="3,1"/><path d="M7 6.5 H12" fill="none" stroke="#000" stroke-width="1" /><path d="M6 10 L1.5 14.5" fill="none" stroke="#000" stroke-width="2.5" /></svg>
<svg style="position:absolute;left:324px;top:51px;overflow:visible;" width="20" height="20" viewBox="0 0 20 20"><path d="M1.5 1.5 H11.5 V6 M1.5 1.5 V12.5 H5" fill="none" stroke="#000" stroke-width="1" stroke-dasharray="1,1"/><circle cx="10" cy="11" r="3.5" fill="#fff" stroke="#000" stroke-dasharray="2,1"/><path d="M8.5 11 H11.5 M10 9.5 V12.5" fill="none" stroke="#000" stroke-width="1" /></svg>
<svg style="position:absolute;left:346px;top:51px;overflow:visible;" width="20" height="20" viewBox="0 0 20 20"><path d="M0.5 1.5 H15.5 V14.5 H0.5Z" fill="#fff" stroke="#000" stroke-width="1.2"/><path d="M2 6.5 H14" fill="none" stroke="#000" stroke-width="1" /><path d="M2 6.5 L5 4 L5 9Z" fill="#000" /><path d="M14 6.5 L11 4 L11 9Z" fill="#000" /></svg>
<svg style="position:absolute;left:368px;top:51px;overflow:visible;" width="20" height="20" viewBox="0 0 20 20"><path d="M0.5 0.5 H15.5 V15.5 H0.5Z" fill="#2a6a6a" stroke="#000"/><path d="M5 3 H11 V13 H5Z" fill="#fff" /><path d="M6.5 5.5 H9.5 M6.5 7.5 H9.5 M6.5 9.5 H9.5" fill="none" stroke="#2a6a6a" stroke-width="1" /></svg>
<svg style="position:absolute;left:390px;top:51px;overflow:visible;" width="20" height="20" viewBox="0 0 20 20"><circle cx="9" cy="7" r="5.5" fill="none" stroke="#a0a0a0" stroke-dasharray="2,1"/><path d="M5 11 L1 15" fill="none" stroke="#a0a0a0" stroke-width="2" /><path d="M6.5 4.5 H11.5 V9.5 H6.5Z" fill="none" stroke="#a0a0a0"/></svg>
<svg style="position:absolute;left:418px;top:51px;overflow:visible;" width="20" height="20" viewBox="0 0 20 20"><path d="M0.5 1.5 H15.5 V15.5 H0.5Z" fill="#fff" stroke="#000"/><circle cx="8" cy="5" r="2.3" fill="#1040d0"/><path d="M2 14 L4.5 9 L7 14Z" fill="#e02020" /><path d="M8.5 9.5 H14.5 V14.5 H8.5Z" fill="#fff" stroke="#000"/><path d="M10 11 H13 V13 H10Z" fill="#2050c0" /><path d="M18.5 12 V18.5 H12 Z" fill="#f4f46a"/><path d="M18.5 12.5 V18.5 H12.5" fill="none" stroke="#000" stroke-width="1.3"/></svg>
<svg style="position:absolute;left:440px;top:51px;overflow:visible;" width="20" height="20" viewBox="0 0 20 20"><path d="M0.5 9.5 H12.5 L14.5 15.5 H2.5Z" fill="#f0e870" stroke="#000"/><path d="M4.5 1.5 H14.5 V10.5 H4.5Z" fill="#20b0a0" stroke="#000"/><circle cx="11" cy="4.5" r="1.5" fill="#e0e040"/><path d="M5 10 L8 6 L11 10Z" fill="#107070" /><path d="M18.5 12 V18.5 H12 Z" fill="#f4f46a"/><path d="M18.5 12.5 V18.5 H12.5" fill="none" stroke="#000" stroke-width="1.3"/></svg>
<svg style="position:absolute;left:461px;top:51px;overflow:visible;" width="20" height="20" viewBox="0 0 20 20"><path d="M1 15 L9 7" fill="none" stroke="#20a020" stroke-width="1" /><path d="M9 8 L14 3 L12 1 L7 6Z" fill="#fff" stroke="#000"/><path d="M12.5 1.5 L14.5 3.5 L15.5 2.5 L13.5 0.5Z" fill="#000" /></svg>
<svg style="position:absolute;left:490px;top:51px;overflow:visible;" width="20" height="20" viewBox="0 0 20 20"><text x="0" y="6" font-size="6" font-family="Liberation Sans" font-weight="bold" fill="#000">ABC</text><path d="M2 10 L6 14 L15 5" fill="none" stroke="#000080" stroke-width="2" /><path d="M18.5 12 V18.5 H12 Z" fill="#f4f46a"/><path d="M18.5 12.5 V18.5 H12.5" fill="none" stroke="#000" stroke-width="1.3"/></svg>
<svg style="position:absolute;left:562px;top:51px;overflow:visible;" width="20" height="20" viewBox="0 0 20 20"><path d="M3 6 Q6 2 10 5 L13 9 Q14 13 10 14 Q6 14 4 10Z" fill="none" stroke="#000" stroke-width="1" /><path d="M2 4 L5 2" fill="none" stroke="#a0a0a0" stroke-width="1" /><text x="11" y="5" font-size="5" fill="#e00000" font-family="Liberation Sans">Y</text><text x="0" y="15" font-size="5" fill="#e00000" font-family="Liberation Sans">X</text><path d="M18.5 12 V18.5 H12 Z" fill="#f4f46a"/><path d="M18.5 12.5 V18.5 H12.5" fill="none" stroke="#000" stroke-width="1.3"/></svg>
<svg style="position:absolute;left:610px;top:51px;overflow:visible;" width="20" height="20" viewBox="0 0 20 20"><path d="M0.5 8.5 H10.5 L13.5 15.5 H2.5Z" fill="#a0a020" stroke="#000"/><path d="M0.5 7.5 H4 L5 8.5 H0.5 V15Z" fill="#e8e070" stroke="#000"/><path d="M8.5 1.5 H15.5 V7.5 H8.5Z" fill="#fff" stroke="#000080"/><path d="M8.5 1.5 H15.5 V3H8.5Z" fill="#000080" /><path d="M2 6 Q3 2 7 3 M5.5 1.5 L7 3 L5 4" fill="none" stroke="#000" stroke-width="1" /><path d="M18.5 12 V18.5 H12 Z" fill="#f4f46a"/><path d="M18.5 12.5 V18.5 H12.5" fill="none" stroke="#000" stroke-width="1.3"/></svg>
<svg style="position:absolute;left:634px;top:51px;overflow:visible;" width="20" height="20" viewBox="0 0 20 20"><path d="M1.5 5.5 H10.5 V14.5 H1.5Z M1.5 5.5 L5.5 1.5 H14.5 V10.5 L10.5 14.5 M10.5 5.5 L14.5 1.5" fill="none" stroke="#a0a0a0" stroke-width="1" /><path d="M18.5 12 V18.5 H12 Z" fill="#f4f46a"/><path d="M18.5 12.5 V18.5 H12.5" fill="none" stroke="#000" stroke-width="1.3"/></svg>
<svg style="position:absolute;left:656px;top:51px;overflow:visible;" width="20" height="20" viewBox="0 0 20 20"><path d="M8 2 L14 8 L8 14 L2 8Z" fill="none" stroke="#a0a0a0" stroke-width="1" /><path d="M8 0 V4 M16 8 H12 M8 16 V12 M0 8 H4" fill="none" stroke="#a0a0a0" stroke-width="1" /><path d="M18.5 12 V18.5 H12 Z" fill="#f4f46a"/><path d="M18.5 12.5 V18.5 H12.5" fill="none" stroke="#000" stroke-width="1.3"/></svg>
<svg style="position:absolute;left:677px;top:51px;overflow:visible;" width="20" height="20" viewBox="0 0 20 20"><path d="M3.5 5.5 H13.5 V12.5 H3.5Z" fill="#e0e0e0" stroke="#a0a0a0"/><circle cx="8.5" cy="9" r="2" fill="none" stroke="#a0a0a0"/><path d="M1 3 Q-1 9 2 14" fill="none" stroke="#a0a0a0" stroke-width="1" /><path d="M18.5 12 V18.5 H12 Z" fill="#f4f46a"/><path d="M18.5 12.5 V18.5 H12.5" fill="none" stroke="#000" stroke-width="1.3"/></svg>
<svg style="position:absolute;left:699px;top:51px;overflow:visible;" width="20" height="20" viewBox="0 0 20 20"><ellipse cx="8" cy="12" rx="7" ry="2.5" fill="none" stroke="#a0a0a0"/><ellipse cx="7" cy="5" rx="5" ry="2" fill="none" stroke="#a0a0a0"/><path d="M2 5 Q2 11 7 11 Q12 11 12 5 M12 6 Q15 6 14 9 L11 10" fill="none" stroke="#a0a0a0" stroke-width="1" /><path d="M18.5 12 V18.5 H12 Z" fill="#f4f46a"/><path d="M18.5 12.5 V18.5 H12.5" fill="none" stroke="#000" stroke-width="1.3"/></svg>
<svg style="position:absolute;left:727px;top:51px;overflow:visible;" width="20" height="20" viewBox="0 0 20 20"><path d="M1.5 4.5 H10.5 V15.5 H1.5Z" fill="#fff" stroke="#000" stroke-width="1.2"/><path d="M3 6 L6 3 L8 5 L5 8Z" fill="#fff" stroke="#000"/><path d="M5 5 Q9 0 14 3 M12 1 L14 3 L12 5" fill="none" stroke="#000" stroke-width="1.2" /><path d="M18.5 12 V18.5 H12 Z" fill="#f4f46a"/><path d="M18.5 12.5 V18.5 H12.5" fill="none" stroke="#000" stroke-width="1.3"/></svg>
<svg style="position:absolute;left:749px;top:51px;overflow:visible;" width="20" height="20" viewBox="0 0 20 20"><path d="M2.5 6.5 H9.5 V10.5 H2.5Z" fill="#fff" stroke="#000"/><path d="M1.5 10.5 H15.5 V14.5 H1.5Z" fill="#000" /><path d="M3 11.5 H5.5 V13.5 H3Z M7 11.5 H9.5 V13.5 H7Z M11 11.5 H13.5 V13.5 H11Z" fill="#fff" /><path d="M5 6 Q9 0 14 3 M12 1 L14 3 L12 5" fill="none" stroke="#000" stroke-width="1.2" /><path d="M18.5 12 V18.5 H12 Z" fill="#f4f46a"/><path d="M18.5 12.5 V18.5 H12.5" fill="none" stroke="#000" stroke-width="1.3"/></svg>
<svg style="position:absolute;left:771px;top:51px;overflow:visible;" width="20" height="20" viewBox="0 0 20 20"><path d="M2 4 H4 V14 H2Z" fill="#e0e000" /><path d="M5 1 H7 V15 H5Z" fill="#20c020" /><path d="M8 3 H10 V15 H8Z" fill="#e02020" /><path d="M11 2 H13 V15 H11Z" fill="#2040e0" /><path d="M0 8 H16 V10 H0Z" fill="#30a030"  opacity="0.8"/></svg>
<svg style="position:absolute;left:821px;top:51px;overflow:visible;" width="20" height="20" viewBox="0 0 20 20"><path d="M3.5 2 V13.5 H15 M3.5 13.5 L9 8" fill="none" stroke="#000" stroke-width="1.3" /><path d="M3.5 0 L1 4 H6Z M16 13.5 L12 11 V16Z M10 7 L7 8 L9 10Z" fill="#000" /></svg>
<svg style="position:absolute;left:849px;top:51px;overflow:visible;" width="20" height="20" viewBox="0 0 20 20"><path d="M1 6 L8 1 L15 5 L8 11Z" fill="#6a1a9a" stroke="#000"/><path d="M1 6 L8 11 L8 14 L1 9Z" fill="#fff" stroke="#000"/><path d="M8 11 L15 5 L15 8 L8 14Z" fill="#301050" /><path d="M6 5 Q8 3 10 5 L8 7Z" fill="#f0d020" /><path d="M18.5 12 V18.5 H12 Z" fill="#f4f46a"/><path d="M18.5 12.5 V18.5 H12.5" fill="none" stroke="#000" stroke-width="1.3"/></svg>
<div style="position:absolute;left:514px;top:48px;width:22px;height:23px;background:linear-gradient(#e4effa,#d6e6f7);border:1px solid #7eaee6;"></div>
<svg style="position:absolute;left:517px;top:51px;overflow:visible;" width="20" height="20" viewBox="0 0 20 20"><rect x="4" y="6" width="1" height="1" fill="#000080"/><rect x="4" y="9" width="1" height="1" fill="#000080"/><rect x="4" y="12" width="1" height="1" fill="#000080"/><rect x="7" y="6" width="1" height="1" fill="#000080"/><rect x="7" y="9" width="1" height="1" fill="#000080"/><rect x="7" y="12" width="1" height="1" fill="#000080"/><rect x="10" y="6" width="1" height="1" fill="#000080"/><rect x="10" y="9" width="1" height="1" fill="#000080"/><rect x="10" y="12" width="1" height="1" fill="#000080"/><rect x="13" y="6" width="1" height="1" fill="#000080"/><rect x="13" y="9" width="1" height="1" fill="#000080"/><rect x="13" y="12" width="1" height="1" fill="#000080"/><path d="M1 1 L6 6 M6 1 L1 6" fill="none" stroke="#606060" stroke-width="1" /><path d="M18.5 12 V18.5 H12 Z" fill="#f4f46a"/><path d="M18.5 12.5 V18.5 H12.5" fill="none" stroke="#000" stroke-width="1.3"/></svg>
<div style="position:absolute;left:536px;top:48px;width:22px;height:23px;background:linear-gradient(#e4effa,#d6e6f7);border:1px solid #7eaee6;"></div>
<svg style="position:absolute;left:539px;top:51px;overflow:visible;" width="20" height="20" viewBox="0 0 20 20"><path d="M3.5 1 V13.5 H15" fill="none" stroke="#000" stroke-width="1.2" /><path d="M10 2 H14 V6 H10Z" fill="#e00020" /><path d="M11 3 H13 V5 H11Z" fill="#fff" /><path d="M18.5 12 V18.5 H12 Z" fill="#f4f46a"/><path d="M18.5 12.5 V18.5 H12.5" fill="none" stroke="#000" stroke-width="1.3"/></svg>
<div style="position:absolute;left:580px;top:48px;width:22px;height:23px;background:linear-gradient(#e4effa,#d6e6f7);border:1px solid #7eaee6;"></div>
<svg style="position:absolute;left:583px;top:51px;overflow:visible;" width="20" height="20" viewBox="0 0 20 20"><path d="M1.5 8.5 L8 6.5 L8 15.5 L1.5 14.5Z" fill="#e80010" stroke="#200000"/><path d="M8 6.5 L14.5 8.5 L14.5 13.5 L8 15.5Z" fill="#900000" stroke="#200000"/><path d="M8.5 1.5 L12.5 1.5 L15.5 4.5 L15.5 9.5 L10.5 10.5 L8.5 6Z" fill="#fff" stroke="#000"/><path d="M10 4 H13 M11 6.5 H14" fill="none" stroke="#000" stroke-width="1" /><path d="M1 1 L7 7 M4 0.5 L7 4" fill="none" stroke="#000" stroke-width="1.6" /><path d="M18.5 12 V18.5 H12 Z" fill="#f4f46a"/><path d="M18.5 12.5 V18.5 H12.5" fill="none" stroke="#000" stroke-width="1.3"/></svg>
<div style="position:absolute;left:796px;top:48px;width:22px;height:23px;background:linear-gradient(#e4effa,#d6e6f7);border:1px solid #7eaee6;"></div>
<svg style="position:absolute;left:799px;top:51px;overflow:visible;" width="20" height="20" viewBox="0 0 20 20"><path d="M2.5 1.5 H10.5 L13.5 4.5 V14.5 H2.5Z" fill="#fff" stroke="#000" stroke-width="1.2"/><path d="M3.5 15 H14.5 V5 H14 V14.5 H3.5Z" fill="#808080" /><path d="M7.5 11.5 H10.5 V8.5" fill="none" stroke="#a0a0a0" stroke-width="1" /></svg>
<svg style="position:absolute;left:893px;top:51px;overflow:visible;" width="20" height="20" viewBox="0 0 20 20"><ellipse cx="8" cy="12" rx="7" ry="2.5" fill="#d0d0d0" stroke="#a0a0a0"/><ellipse cx="7" cy="5" rx="5" ry="2" fill="#e8e8e8" stroke="#a0a0a0"/><path d="M2 5 Q2 11 7 11 Q12 11 12 5Z" fill="#b8b8b8" stroke="#a0a0a0"/></svg>
<svg style="position:absolute;left:915px;top:51px;overflow:visible;" width="20" height="20" viewBox="0 0 20 20"><ellipse cx="8" cy="12" rx="7" ry="2.5" fill="none" stroke="#a0a0a0"/><ellipse cx="7" cy="5" rx="5" ry="2" fill="none" stroke="#a0a0a0"/><path d="M2 5 Q2 11 7 11 Q12 11 12 5 M12 6 Q15 6 14 9 L11 10" fill="none" stroke="#a0a0a0" stroke-width="1" /></svg>
<svg style="position:absolute;left:937px;top:51px;overflow:visible;" width="20" height="20" viewBox="0 0 20 20"><ellipse cx="8" cy="12" rx="7" ry="2.5" fill="none" stroke="#a0a0a0"/><ellipse cx="7" cy="5" rx="5" ry="2" fill="none" stroke="#a0a0a0"/><path d="M2 5 Q2 11 7 11 Q12 11 12 5 M12 6 Q15 6 14 9 L11 10" fill="none" stroke="#a0a0a0" stroke-width="1" /></svg>
<svg style="position:absolute;left:959px;top:51px;overflow:visible;" width="20" height="20" viewBox="0 0 20 20"><ellipse cx="8" cy="12" rx="7" ry="2.5" fill="none" stroke="#a0a0a0"/><ellipse cx="7" cy="5" rx="5" ry="2" fill="none" stroke="#a0a0a0"/><path d="M2 5 Q2 11 7 11 Q12 11 12 5 M12 6 Q15 6 14 9 L11 10" fill="none" stroke="#a0a0a0" stroke-width="1" /></svg>
<svg style="position:absolute;left:1005px;top:51px;overflow:visible;" width="20" height="20" viewBox="0 0 20 20"><path d="M3.5 3.5 H12.5 V12.5 H3.5Z" fill="none" stroke="#a0a0a0" stroke-width="1" /><path d="M2 2 H4 V4 H2Z" fill="#8c8c8c" /><path d="M12 2 H14 V4 H12Z" fill="#8c8c8c" /><path d="M2 12 H4 V14 H2Z" fill="#8c8c8c" /><path d="M12 12 H14 V14 H12Z" fill="#8c8c8c" /><path d="M7 2 H9 V4 H7Z" fill="#8c8c8c" /><path d="M2 7 H4 V9 H2Z" fill="#8c8c8c" /></svg>
<svg style="position:absolute;left:1027px;top:51px;overflow:visible;" width="20" height="20" viewBox="0 0 20 20"><path d="M1.5 1.5 H8.5 V8.5 H1.5Z M7.5 7.5 H12.5 V12.5 H7.5Z M9.5 9.5 H15 V15H9.5Z" fill="none" stroke="#a0a0a0" stroke-width="1" /><path d="M3 3 L7 7" fill="none" stroke="#a0a0a0" stroke-width="1" /></svg>
<svg style="position:absolute;left:1049px;top:51px;overflow:visible;" width="20" height="20" viewBox="0 0 20 20"><path d="M2 14 H14 M8 2 L13 8 Q8 12 3 8Z" fill="none" stroke="#a0a0a0" stroke-width="1" /></svg>
<svg style="position:absolute;left:1094px;top:51px;overflow:visible;" width="20" height="20" viewBox="0 0 20 20"><path d="M2.5 5.5 H11.5 V14.5 H2.5Z M2.5 5.5 L6.5 1.5 H15.5 V10.5 L11.5 14.5 M11.5 5.5 L15.5 1.5" fill="none" stroke="#8c8c8c" stroke-width="1" /></svg>
<svg style="position:absolute;left:1116px;top:51px;overflow:visible;" width="20" height="20" viewBox="0 0 20 20"><path d="M2.5 5.5 L6.5 1.5 H15.5 L11.5 5.5Z" fill="#c8c8c8" /><path d="M2.5 5.5 H11.5 V14.5 H2.5Z M2.5 5.5 L6.5 1.5 H15.5 V10.5 L11.5 14.5 M11.5 5.5 L15.5 1.5" fill="none" stroke="#8c8c8c" stroke-width="1" /></svg>
<svg style="position:absolute;left:1138px;top:51px;overflow:visible;" width="20" height="20" viewBox="0 0 20 20"><path d="M2.5 5.5 H11.5 V14.5 H2.5Z" fill="#d0d0d0" /><path d="M2.5 5.5 H11.5 V14.5 H2.5Z M2.5 5.5 L6.5 1.5 H15.5 V10.5 L11.5 14.5 M11.5 5.5 L15.5 1.5" fill="none" stroke="#8c8c8c" stroke-width="1" /></svg>
<svg style="position:absolute;left:1160px;top:51px;overflow:visible;" width="20" height="20" viewBox="0 0 20 20"><path d="M11.5 5.5 L15.5 1.5 V10.5 L11.5 14.5Z" fill="#c8c8c8" /><path d="M2.5 5.5 H11.5 V14.5 H2.5Z M2.5 5.5 L6.5 1.5 H15.5 V10.5 L11.5 14.5 M11.5 5.5 L15.5 1.5" fill="none" stroke="#8c8c8c" stroke-width="1" /></svg>
<svg style="position:absolute;left:1182px;top:51px;overflow:visible;" width="20" height="20" viewBox="0 0 20 20"><path d="M2.5 5.5 L6.5 1.5 H15.5 L11.5 5.5Z" fill="#c8c8c8" /><path d="M2.5 5.5 H11.5 V14.5 H2.5Z M2.5 5.5 L6.5 1.5 H15.5 V10.5 L11.5 14.5 M11.5 5.5 L15.5 1.5" fill="none" stroke="#8c8c8c" stroke-width="1" /></svg>
<svg style="position:absolute;left:1204px;top:51px;overflow:visible;" width="20" height="20" viewBox="0 0 20 20"><path d="M2.5 5.5 H11.5 V14.5 H2.5Z M2.5 5.5 L6.5 1.5 H15.5 V10.5 L11.5 14.5 M11.5 5.5 L15.5 1.5" fill="none" stroke="#8c8c8c" stroke-width="1" /></svg>
<svg style="position:absolute;left:1226px;top:51px;overflow:visible;" width="20" height="20" viewBox="0 0 20 20"><path d="M8 1 L15 4.5 V11.5 L8 15 L1 11.5 V4.5Z M1 4.5 L8 8 L15 4.5 M8 8 V15" fill="none" stroke="#8c8c8c" stroke-width="1" /></svg>
<svg style="position:absolute;left:1248px;top:51px;overflow:visible;" width="20" height="20" viewBox="0 0 20 20"><path d="M8 8 L15 4.5 V11.5 L8 15Z" fill="#c0c0c0" /><path d="M8 1 L15 4.5 V11.5 L8 15 L1 11.5 V4.5Z M1 4.5 L8 8 L15 4.5 M8 8 V15" fill="none" stroke="#8c8c8c" stroke-width="1" /></svg>
<svg style="position:absolute;left:1270px;top:51px;overflow:visible;" width="20" height="20" viewBox="0 0 20 20"><path d="M8 1 L15 4.5 V11.5 L8 15 L1 11.5 V4.5Z M1 4.5 L8 8 L15 4.5 M8 8 V15" fill="none" stroke="#8c8c8c" stroke-width="1" /></svg>
<svg style="position:absolute;left:1292px;top:51px;overflow:visible;" width="20" height="20" viewBox="0 0 20 20"><path d="M8 8 L15 4.5 V11.5 L8 15Z" fill="#c0c0c0" /><path d="M8 1 L15 4.5 V11.5 L8 15 L1 11.5 V4.5Z M1 4.5 L8 8 L15 4.5 M8 8 V15" fill="none" stroke="#8c8c8c" stroke-width="1" /></svg>
<svg style="position:absolute;left:13px;top:77px;overflow:visible;" width="20" height="20" viewBox="0 0 20 20"><path d="M1.5 5.5 H10.5 V14.5 H1.5Z M1.5 5.5 L5.5 1.5 H14.5 V10.5 L10.5 14.5 M10.5 5.5 L14.5 1.5" fill="none" stroke="#a0a0a0" stroke-width="1" /><path d="M1 13 H3.5 V15.5 H1Z" fill="none" stroke="#8c8c8c"/><path d="M13 1 H15.5 V3.5 H13Z" fill="none" stroke="#8c8c8c"/><path d="M13 9 H15.5 V11.5 H13Z" fill="none" stroke="#8c8c8c"/></svg>
<svg style="position:absolute;left:35px;top:77px;overflow:visible;" width="20" height="20" viewBox="0 0 20 20"><path d="M1.5 5.5 H10.5 V14.5 H1.5Z M1.5 5.5 L5.5 1.5 H14.5 V10.5 L10.5 14.5 M10.5 5.5 L14.5 1.5" fill="none" stroke="#a0a0a0" stroke-width="1" /><path d="M1 13 H3.5 V15.5 H1Z" fill="none" stroke="#8c8c8c"/><path d="M13 1 H15.5 V3.5 H13Z" fill="none" stroke="#8c8c8c"/><path d="M13 9 H15.5 V11.5 H13Z" fill="none" stroke="#8c8c8c"/></svg>
<svg style="position:absolute;left:57px;top:77px;overflow:visible;" width="20" height="20" viewBox="0 0 20 20"><circle cx="8" cy="8" r="6.5" fill="#d8d8d8" stroke="#a0a0a0"/><circle cx="8" cy="8" r="1.5" fill="none" stroke="#a0a0a0"/></svg>
<svg style="position:absolute;left:79px;top:77px;overflow:visible;" width="20" height="20" viewBox="0 0 20 20"><ellipse cx="8" cy="8" rx="7" ry="5" fill="#d0d0d0" stroke="#a0a0a0"/><ellipse cx="8" cy="9" rx="3" ry="1.5" fill="#f0f0f0" stroke="#a0a0a0"/></svg>
<svg style="position:absolute;left:101px;top:77px;overflow:visible;" width="20" height="20" viewBox="0 0 20 20"><path d="M12.5 1.5 L13.5 12.5 Q8 15 2 13Z" fill="#d8d8d8" stroke="#a0a0a0"/></svg>
<svg style="position:absolute;left:123px;top:77px;overflow:visible;" width="20" height="20" viewBox="0 0 20 20"><path d="M2 8 L7 3 L14 5 L14 12 L7 14 L2 12Z" fill="#f0f0f0" stroke="#a0a0a0"/><path d="M7 3 L9 8 L14 12 M9 8 L7 14" fill="none" stroke="#a0a0a0" stroke-width="1" /></svg>
<svg style="position:absolute;left:145px;top:77px;overflow:visible;" width="20" height="20" viewBox="0 0 20 20"><path d="M3 4 L10 2 L14 8 L7 14 L2 10Z" fill="#f0f0f0" stroke="#a0a0a0"/><path d="M4 6 L11 9" fill="none" stroke="#a0a0a0" stroke-width="1" /></svg>
<svg style="position:absolute;left:167px;top:77px;overflow:visible;" width="20" height="20" viewBox="0 0 20 20"><path d="M3 4 L10 2 L14 8 L7 14 L2 10Z" fill="#f0f0f0" stroke="#a0a0a0"/><path d="M4 6 L11 9" fill="none" stroke="#a0a0a0" stroke-width="1" /></svg>
<svg style="position:absolute;left:189px;top:77px;overflow:visible;" width="20" height="20" viewBox="0 0 20 20"><path d="M3 4 L10 2 L14 8 L7 14 L2 10Z" fill="#f0f0f0" stroke="#a0a0a0"/><path d="M4 6 L11 9" fill="none" stroke="#a0a0a0" stroke-width="1" /></svg>
<svg style="position:absolute;left:211px;top:77px;overflow:visible;" width="20" height="20" viewBox="0 0 20 20"><path d="M2 2 V14 M4 8 H8 M7 6 L9 8 L7 10 M11 2 Q10 8 13 8 Q15 8 14 2 M12.5 8 V14 M11 14 H14" fill="none" stroke="#a0a0a0" stroke-width="1" /></svg>
<svg style="position:absolute;left:233px;top:77px;overflow:visible;" width="20" height="20" viewBox="0 0 20 20"><ellipse cx="8" cy="4" rx="6" ry="2.5" fill="#e0e0e0" stroke="#a0a0a0"/><path d="M2 4 V12 Q8 16 14 12 V4" fill="none" stroke="#a0a0a0" stroke-width="1" /><path d="M7 9 H11 V13H7Z" fill="#e0e0e0" stroke="#a0a0a0"/></svg>
<svg style="position:absolute;left:255px;top:77px;overflow:visible;" width="20" height="20" viewBox="0 0 20 20"><ellipse cx="8" cy="4" rx="6" ry="2.5" fill="#e0e0e0" stroke="#a0a0a0"/><path d="M2 4 V12 Q8 16 14 12 V4" fill="none" stroke="#a0a0a0" stroke-width="1" /><path d="M7 9 H11 V13H7Z" fill="#e0e0e0" stroke="#a0a0a0"/></svg>
<svg style="position:absolute;left:277px;top:77px;overflow:visible;" width="20" height="20" viewBox="0 0 20 20"><circle cx="8" cy="8" r="7" fill="#e0e0e0" stroke="#a0a0a0"/><circle cx="8" cy="8" r="2" fill="#fff" stroke="#a0a0a0"/></svg>
<svg style="position:absolute;left:299px;top:77px;overflow:visible;" width="20" height="20" viewBox="0 0 20 20"><path d="M1.5 1.5 V14.5 M1.5 1.5 H14.5" fill="none" stroke="#a0a0a0" stroke-width="1" /><path d="M4.5 1.5 V14.5 M1.5 4.5 H14.5" fill="none" stroke="#a0a0a0" stroke-width="1" /><path d="M7.5 1.5 V14.5 M1.5 7.5 H14.5" fill="none" stroke="#a0a0a0" stroke-width="1" /><path d="M10.5 1.5 V14.5 M1.5 10.5 H14.5" fill="none" stroke="#a0a0a0" stroke-width="1" /><path d="M13.5 1.5 V14.5 M1.5 13.5 H14.5" fill="none" stroke="#a0a0a0" stroke-width="1" /></svg>
<svg style="position:absolute;left:321px;top:77px;overflow:visible;" width="20" height="20" viewBox="0 0 20 20"><path d="M2 14 L3 4 L14 13Z M3 4 L10 10" fill="none" stroke="#a0a0a0" stroke-width="1" /></svg>
<svg style="position:absolute;left:343px;top:77px;overflow:visible;" width="20" height="20" viewBox="0 0 20 20"><text x="0" y="12" font-size="7" fill="#a0a0a0" font-family="Liberation Sans">30</text><path d="M9 8 L13 3 M2 14 H13" fill="none" stroke="#a0a0a0" stroke-width="1" /></svg>
<svg style="position:absolute;left:365px;top:77px;overflow:visible;" width="20" height="20" viewBox="0 0 20 20"><path d="M1 15 Q8 -2 15 15" fill="none" stroke="#a0a0a0" stroke-width="1" /><text x="4" y="14" font-size="6" fill="#a0a0a0" font-family="Liberation Sans">30</text></svg>
<svg style="position:absolute;left:387px;top:77px;overflow:visible;" width="20" height="20" viewBox="0 0 20 20"><path d="M1 15 Q8 -2 15 15" fill="none" stroke="#a0a0a0" stroke-width="1" /><text x="4" y="14" font-size="6" fill="#a0a0a0" font-family="Liberation Sans">30</text></svg>
<svg style="position:absolute;left:432px;top:77px;overflow:visible;" width="20" height="20" viewBox="0 0 20 20"><circle cx="9" cy="7" r="5" fill="#d8d8d8" stroke="#a0a0a0"/><path d="M1.5 7.5 H9.5 V14.5 H1.5Z" fill="#e0e0e0" stroke="#a0a0a0"/></svg>
<svg style="position:absolute;left:454px;top:77px;overflow:visible;" width="20" height="20" viewBox="0 0 20 20"><circle cx="10" cy="6" r="5" fill="none" stroke="#a0a0a0"/><path d="M1.5 5.5 H9.5 V14.5 H1.5Z" fill="#e0e0e0" stroke="#a0a0a0"/><path d="M3.5 3.5 H11.5 V11.5" fill="none" stroke="#a0a0a0" stroke-width="1" /></svg>
<svg style="position:absolute;left:476px;top:77px;overflow:visible;" width="20" height="20" viewBox="0 0 20 20"><circle cx="10" cy="6" r="5" fill="none" stroke="#a0a0a0"/><path d="M1.5 5.5 H9.5 V14.5 H1.5Z M4 5.5 V12 H9.5" fill="none" stroke="#a0a0a0" stroke-width="1" /></svg>
<svg style="position:absolute;left:499px;top:77px;overflow:visible;" width="20" height="20" viewBox="0 0 20 20"><circle cx="8" cy="8" r="6.5" fill="#d0d0d0" stroke="#a0a0a0"/><path d="M3 5 L11 13 M5 3 L13 11" fill="none" stroke="#a0a0a0" stroke-width="1" /></svg>
<svg style="position:absolute;left:527px;top:77px;overflow:visible;" width="20" height="20" viewBox="0 0 20 20"><path d="M1.5 5.5 H9.5 V14.5 H1.5Z" fill="#1a6e98" stroke="#103050"/><path d="M5 3 L11 1 L15 6 L12 11 L7 11Z" fill="#1a6e98" stroke="#103050"/></svg>
<svg style="position:absolute;left:549px;top:77px;overflow:visible;" width="20" height="20" viewBox="0 0 20 20"><circle cx="10" cy="6" r="5" fill="#fff" stroke="#103050"/><path d="M1.5 5.5 H9.5 V14.5 H1.5Z" fill="#1a6e98" stroke="#103050"/><path d="M5 5.5 H9.5 V10 A5 5 0 0 1 5 5.5Z" fill="#fff" /></svg>
<svg style="position:absolute;left:571px;top:77px;overflow:visible;" width="20" height="20" viewBox="0 0 20 20"><circle cx="10" cy="6" r="5" fill="#fff" stroke="#103050"/><path d="M1.5 5.5 H9.5 V14.5 H1.5Z" fill="#fff" stroke="#103050"/><path d="M5 5.5 H9.5 V10 A5 5 0 0 1 5 5.5Z" fill="#1a6e98" /></svg>
<svg style="position:absolute;left:615px;top:77px;overflow:visible;" width="20" height="20" viewBox="0 0 20 20"><path d="M5 1 V12 H15 M5 12 L1 15" fill="none" stroke="#000" stroke-width="1.2" /><path d="M5 0 L3 3 H7Z M16 12 L13 10 V14Z" fill="#000" /><rect x="9" y="5" width="3" height="3" fill="#000080"/><rect x="10" y="6" width="1" height="1" fill="#fff"/><text x="0" y="6" font-size="5" fill="#0000a0">x</text></svg>
<svg style="position:absolute;left:637px;top:77px;overflow:visible;" width="20" height="20" viewBox="0 0 20 20"><path d="M1.5 8.5 L7 3 L13 9 L7.5 14.5Z" fill="none" stroke="#000" stroke-width="1.2" /><path d="M4.5 7 L10 12.5" fill="none" stroke="#000" stroke-width="1" /><path d="M4 6 L7 6.5 L4.5 9Z M10.5 13 L7.5 12.5 L10 10Z" fill="#000" /><text x="10" y="7" font-size="8" font-weight="bold" fill="#0000b0" font-family="Liberation Sans">?</text></svg>
<svg style="position:absolute;left:659px;top:77px;overflow:visible;" width="20" height="20" viewBox="0 0 20 20"><path d="M1 14.5 H14 M1 14.5 L7 2 M7 2 L13 14" fill="none" stroke="#000" stroke-width="1.2" /><path d="M5 7 Q9 6 10 12" fill="none" stroke="#000" stroke-width="1" /><path d="M9 13 L11.5 10.5 L8 10.5Z" fill="#000" /><text x="10" y="7" font-size="8" font-weight="bold" fill="#0000b0" font-family="Liberation Sans">?</text></svg>
<svg style="position:absolute;left:682px;top:77px;overflow:visible;" width="20" height="20" viewBox="0 0 20 20"><path d="M0.5 1.5 H15.5 V14.5 H0.5Z" fill="#a8b8e0" stroke="#000" stroke-width="1.5"/><rect x="1.5" y="2.5" width="1" height="1" fill="#203090"/><rect x="1.5" y="4.5" width="1" height="1" fill="#203090"/><rect x="1.5" y="6.5" width="1" height="1" fill="#203090"/><rect x="1.5" y="8.5" width="1" height="1" fill="#203090"/><rect x="1.5" y="10.5" width="1" height="1" fill="#203090"/><rect x="1.5" y="12.5" width="1" height="1" fill="#203090"/><rect x="3.5" y="2.5" width="1" height="1" fill="#203090"/><rect x="3.5" y="4.5" width="1" height="1" fill="#203090"/><rect x="3.5" y="6.5" width="1" height="1" fill="#203090"/><rect x="3.5" y="8.5" width="1" height="1" fill="#203090"/><rect x="3.5" y="10.5" width="1" height="1" fill="#203090"/><rect x="3.5" y="12.5" width="1" height="1" fill="#203090"/><rect x="5.5" y="2.5" width="1" height="1" fill="#203090"/><rect x="5.5" y="4.5" width="1" height="1" fill="#203090"/><rect x="5.5" y="6.5" width="1" height="1" fill="#203090"/><rect x="5.5" y="8.5" width="1" height="1" fill="#203090"/><rect x="5.5" y="10.5" width="1" height="1" fill="#203090"/><rect x="5.5" y="12.5" width="1" height="1" fill="#203090"/><rect x="7.5" y="2.5" width="1" height="1" fill="#203090"/><rect x="7.5" y="4.5" width="1" height="1" fill="#203090"/><rect x="7.5" y="6.5" width="1" height="1" fill="#203090"/><rect x="7.5" y="8.5" width="1" height="1" fill="#203090"/><rect x="7.5" y="10.5" width="1" height="1" fill="#203090"/><rect x="7.5" y="12.5" width="1" height="1" fill="#203090"/><rect x="9.5" y="2.5" width="1" height="1" fill="#203090"/><rect x="9.5" y="4.5" width="1" height="1" fill="#203090"/><rect x="9.5" y="6.5" width="1" height="1" fill="#203090"/><rect x="9.5" y="8.5" width="1" height="1" fill="#203090"/><rect x="9.5" y="10.5" width="1" height="1" fill="#203090"/><rect x="9.5" y="12.5" width="1" height="1" fill="#203090"/><rect x="11.5" y="2.5" width="1" height="1" fill="#203090"/><rect x="11.5" y="4.5" width="1" height="1" fill="#203090"/><rect x="11.5" y="6.5" width="1" height="1" fill="#203090"/><rect x="11.5" y="8.5" width="1" height="1" fill="#203090"/><rect x="11.5" y="10.5" width="1" height="1" fill="#203090"/><rect x="11.5" y="12.5" width="1" height="1" fill="#203090"/><rect x="13.5" y="2.5" width="1" height="1" fill="#203090"/><rect x="13.5" y="4.5" width="1" height="1" fill="#203090"/><rect x="13.5" y="6.5" width="1" height="1" fill="#203090"/><rect x="13.5" y="8.5" width="1" height="1" fill="#203090"/><rect x="13.5" y="10.5" width="1" height="1" fill="#203090"/><rect x="13.5" y="12.5" width="1" height="1" fill="#203090"/><path d="M3 6 L6 8 L3 10 M13 6 L10 8 L13 10 M7 6.5 H9 M7 9.5 H9" fill="none" stroke="#1020a0" stroke-width="1.2" /></svg>
<svg style="position:absolute;left:727px;top:77px;overflow:visible;" width="20" height="20" viewBox="0 0 20 20"><path d="M2.5 2.5 H9.5 V9.5 H2.5Z M4.5 4.5 H11.5 V11.5 H4.5Z M6.5 6.5 H13.5 V13.5 H6.5Z" fill="none" stroke="#a0a0a0" stroke-width="1" /></svg>
<svg style="position:absolute;left:749px;top:77px;overflow:visible;" width="20" height="20" viewBox="0 0 20 20"><path d="M2.5 2.5 H6.5 V6.5 H2.5Z M9.5 2.5 H13.5 V6.5 H9.5Z M2.5 9.5 H6.5 V13.5 H2.5Z M9.5 9.5 H13.5 V13.5 H9.5Z" fill="none" stroke="#a0a0a0" stroke-width="1" /></svg>
<svg style="position:absolute;left:771px;top:77px;overflow:visible;" width="20" height="20" viewBox="0 0 20 20"><circle cx="8" cy="3" r="2" fill="none" stroke="#a0a0a0"/><circle cx="3" cy="8" r="2" fill="none" stroke="#a0a0a0"/><circle cx="13" cy="8" r="2" fill="none" stroke="#a0a0a0"/><circle cx="8" cy="13" r="2" fill="none" stroke="#a0a0a0"/></svg>
<svg style="position:absolute;left:793px;top:77px;overflow:visible;" width="20" height="20" viewBox="0 0 20 20"><path d="M2.5 2.5 H9.5 V9.5 H2.5Z M5.5 5.5 H12.5 V12.5 H5.5Z" fill="none" stroke="#a0a0a0" stroke-width="1" /><path d="M4 4 H11 V11" fill="none" stroke="#a0a0a0" stroke-width="1" /></svg>
<svg style="position:absolute;left:815px;top:77px;overflow:visible;" width="20" height="20" viewBox="0 0 20 20"><path d="M2.5 2.5 H6.5 V6.5 H2.5Z M9.5 2.5 H13.5 V6.5 H9.5Z M2.5 9.5 H6.5 V13.5 H2.5Z M9.5 9.5 H13.5 V13.5 H9.5Z" fill="none" stroke="#a0a0a0" stroke-width="1" /></svg>
<svg style="position:absolute;left:837px;top:77px;overflow:visible;" width="20" height="20" viewBox="0 0 20 20"><circle cx="8" cy="3.5" r="2.5" fill="none" stroke="#a0a0a0"/><circle cx="3.5" cy="8" r="2.5" fill="none" stroke="#a0a0a0"/><circle cx="12.5" cy="8" r="2.5" fill="none" stroke="#a0a0a0"/><circle cx="8" cy="12.5" r="2.5" fill="none" stroke="#a0a0a0"/></svg>
<svg style="position:absolute;left:859px;top:77px;overflow:visible;" width="20" height="20" viewBox="0 0 20 20"><path d="M1 3 H4 V12 H12 V3 H15 V15 H1Z" fill="#e0e0e0" stroke="#a0a0a0"/></svg>
<svg style="position:absolute;left:881px;top:77px;overflow:visible;" width="20" height="20" viewBox="0 0 20 20"><path d="M1 15 L7 15 L7 9Z" fill="#e0e0e0" stroke="#a0a0a0"/><path d="M9 1 L9 7 L15 7Z" fill="#e0e0e0" stroke="#a0a0a0"/></svg>
<svg style="position:absolute;left:925px;top:77px;overflow:visible;" width="20" height="20" viewBox="0 0 20 20"><path d="M1 15 L15 1 M3 9 L9 3 M7 13 L13 7" fill="none" stroke="#a0a0a0" stroke-width="1" /><path d="M3 9 L6 8 L4 6Z" fill="#a0a0a0" /></svg>
<svg style="position:absolute;left:947px;top:77px;overflow:visible;" width="20" height="20" viewBox="0 0 20 20"><path d="M1 15 L7 9 M9 7 L15 1 M5 5 L11 11" fill="none" stroke="#a0a0a0" stroke-width="1" /></svg>
<svg style="position:absolute;left:969px;top:77px;overflow:visible;" width="20" height="20" viewBox="0 0 20 20"><circle cx="8" cy="8" r="6.5" fill="none" stroke="#a0a0a0" stroke-dasharray="8,2"/><path d="M8 8 L13 3" fill="none" stroke="#a0a0a0" stroke-width="1" /></svg>
<svg style="position:absolute;left:991px;top:77px;overflow:visible;" width="20" height="20" viewBox="0 0 20 20"><path d="M1 1 L15 15 M15 1 L1 15" fill="none" stroke="#a0a0a0" stroke-width="1" /></svg>
<svg style="position:absolute;left:1013px;top:77px;overflow:visible;" width="20" height="20" viewBox="0 0 20 20"><path d="M1 8 L8 1 M4 11 L11 4 M7 14 L14 7" fill="none" stroke="#a0a0a0" stroke-width="1" /></svg>
<svg style="position:absolute;left:1035px;top:77px;overflow:visible;" width="20" height="20" viewBox="0 0 20 20"><path d="M1.5 1.5 H10.5 V10.5 H1.5Z" fill="none" stroke="#a0a0a0" stroke-width="1" /><path d="M5.5 5.5 H14.5 V14.5 H5.5Z" fill="none" stroke="#a0a0a0" stroke-width="1" stroke-dasharray="1,1"/><path d="M6 6 L13 13" fill="none" stroke="#a0a0a0" stroke-width="1" /></svg>
<svg style="position:absolute;left:1057px;top:77px;overflow:visible;" width="20" height="20" viewBox="0 0 20 20"><circle cx="8" cy="8" r="7" fill="none" stroke="#a0a0a0"/></svg>
<svg style="position:absolute;left:1079px;top:77px;overflow:visible;" width="20" height="20" viewBox="0 0 20 20"><path d="M1 2 Q10 2 15 6 M1 2 L7 15" fill="none" stroke="#a0a0a0" stroke-width="1" /></svg>
<svg style="position:absolute;left:1108px;top:77px;overflow:visible;" width="20" height="20" viewBox="0 0 20 20"><path d="M3 1 V10 Q3 14 8 14 H15" fill="none" stroke="#a0a0a0" stroke-width="1" /></svg>
<svg style="position:absolute;left:1130px;top:77px;overflow:visible;" width="20" height="20" viewBox="0 0 20 20"><path d="M2 13 L10 5 L13 9 L8 14Z" fill="none" stroke="#a0a0a0" stroke-width="1" stroke-dasharray="2,1"/></svg>
<svg style="position:absolute;left:1152px;top:77px;overflow:visible;" width="20" height="20" viewBox="0 0 20 20"><path d="M2 14 L8 4 L12 10 M10 4 L14 8" fill="none" stroke="#a0a0a0" stroke-width="1" stroke-dasharray="2,1"/></svg>
<svg style="position:absolute;left:1173px;top:77px;overflow:visible;" width="20" height="20" viewBox="0 0 20 20"><path d="M2 14 L12 4 M6 14 L14 6 M12 2 L14 4 L12 6" fill="none" stroke="#a0a0a0" stroke-width="1" /></svg>
<svg style="position:absolute;left:1200px;top:77px;overflow:visible;" width="20" height="20" viewBox="0 0 20 20"><path d="M1 8 L8 1 M8 1 L15 8 M4 11 L8 7 L12 11" fill="none" stroke="#a0a0a0" stroke-width="1" /></svg>
<svg style="position:absolute;left:1222px;top:77px;overflow:visible;" width="20" height="20" viewBox="0 0 20 20"><path d="M1 6 H6 V1 M10 1 V6 H15 M1 10 H6 V15 M10 15 V10 H15" fill="none" stroke="#a0a0a0" stroke-width="1" /></svg>
<svg style="position:absolute;left:1251px;top:77px;overflow:visible;" width="20" height="20" viewBox="0 0 20 20"><path d="M3 5 Q3 1 7 2 L9 3 M6 7 L9 5 L12 7 M10.5 6 V15 M8 15 H13" fill="none" stroke="#a0a0a0" stroke-width="1" /><path d="M2 6 V10" fill="none" stroke="#a0a0a0" stroke-width="1" /></svg>
<svg style="position:absolute;left:1273px;top:77px;overflow:visible;" width="20" height="20" viewBox="0 0 20 20"><path d="M1 8 L8 2 L15 8 L8 14Z" fill="#d0d0d0" stroke="#a0a0a0"/><path d="M6 4 V12 M10 4 V12" fill="none" stroke="#a0a0a0" stroke-width="1" /></svg>
<svg style="position:absolute;left:842px;top:103px;overflow:visible;" width="20" height="20" viewBox="0 0 20 20"><path d="M2 14 L14 2" fill="none" stroke="#000" stroke-width="1" stroke-dasharray="2,1"/><rect x="4" y="10" width="3" height="3" fill="#000080"/><rect x="5" y="11" width="1" height="1" fill="#fff"/><rect x="10" y="4" width="3" height="3" fill="#000080"/><rect x="11" y="5" width="1" height="1" fill="#fff"/></svg>
<svg style="position:absolute;left:864px;top:103px;overflow:visible;" width="20" height="20" viewBox="0 0 20 20"><path d="M1 8 H15" fill="none" stroke="#000" stroke-width="1" stroke-dasharray="2,1"/><rect x="7" y="7" width="3" height="3" fill="#000080"/><rect x="8" y="8" width="1" height="1" fill="#fff"/></svg>
<svg style="position:absolute;left:886px;top:103px;overflow:visible;" width="20" height="20" viewBox="0 0 20 20"><path d="M8 1 V15" fill="none" stroke="#000" stroke-width="1" stroke-dasharray="2,1"/><rect x="7" y="7" width="3" height="3" fill="#000080"/><rect x="8" y="8" width="1" height="1" fill="#fff"/></svg>
<svg style="position:absolute;left:908px;top:103px;overflow:visible;" width="20" height="20" viewBox="0 0 20 20"><path d="M2 14 L14 2" fill="none" stroke="#000" stroke-width="1" stroke-dasharray="2,1"/><rect x="5" y="6" width="3" height="3" fill="#000080"/><rect x="6" y="7" width="1" height="1" fill="#fff"/><rect x="9" y="9" width="3" height="3" fill="#000080"/><rect x="10" y="10" width="1" height="1" fill="#fff"/></svg>
<svg style="position:absolute;left:930px;top:103px;overflow:visible;" width="20" height="20" viewBox="0 0 20 20"><path d="M1 13 L8 6 L14 12" fill="none" stroke="#000" stroke-width="1" stroke-dasharray="2,1"/><rect x="6" y="5" width="3" height="3" fill="#000080"/><rect x="7" y="6" width="1" height="1" fill="#fff"/><rect x="12" y="12" width="3" height="3" fill="#000080"/><rect x="13" y="13" width="1" height="1" fill="#fff"/></svg>
<svg style="position:absolute;left:952px;top:103px;overflow:visible;" width="20" height="20" viewBox="0 0 20 20"><circle cx="8" cy="8" r="6.5" fill="none" stroke="#000" stroke-dasharray="2,1"/><rect x="3" y="7" width="3" height="3" fill="#000080"/><rect x="4" y="8" width="1" height="1" fill="#fff"/><rect x="7" y="7" width="3" height="3" fill="#000080"/><rect x="8" y="8" width="1" height="1" fill="#fff"/><rect x="11" y="7" width="3" height="3" fill="#000080"/><rect x="12" y="8" width="1" height="1" fill="#fff"/></svg>
<svg style="position:absolute;left:974px;top:103px;overflow:visible;" width="20" height="20" viewBox="0 0 20 20"><circle cx="8" cy="8" r="6.5" fill="none" stroke="#000" stroke-dasharray="2,1"/><rect x="2" y="7" width="3" height="3" fill="#000080"/><rect x="3" y="8" width="1" height="1" fill="#fff"/><rect x="12" y="7" width="3" height="3" fill="#000080"/><rect x="13" y="8" width="1" height="1" fill="#fff"/></svg>
<svg style="position:absolute;left:996px;top:103px;overflow:visible;" width="20" height="20" viewBox="0 0 20 20"><circle cx="8" cy="8" r="6.5" fill="none" stroke="#000" stroke-dasharray="2,1"/><rect x="2" y="3" width="3" height="3" fill="#000080"/><rect x="3" y="4" width="1" height="1" fill="#fff"/><rect x="12" y="3" width="3" height="3" fill="#000080"/><rect x="13" y="4" width="1" height="1" fill="#fff"/><rect x="2" y="11" width="3" height="3" fill="#000080"/><rect x="3" y="12" width="1" height="1" fill="#fff"/><rect x="12" y="11" width="3" height="3" fill="#000080"/><rect x="13" y="12" width="1" height="1" fill="#fff"/></svg>
<svg style="position:absolute;left:115px;top:104px;" width="30" height="14" viewBox="0 0 30 14"><path d="M1 7 Q7 1 13 7 Q7 12 1 7Z" fill="#fff" stroke="#303848"/><circle cx="7.5" cy="6.5" r="3" fill="#203060"/><circle cx="6.5" cy="5.5" r="1" fill="#fff"/><circle cx="21" cy="9" r="3" fill="#d8d8d8" stroke="#b0b0b0"/><path d="M23 7 V2 Q23 0 25 1" fill="none" stroke="#b0b0b0" stroke-width="1.3"/></svg>
<div style="position:absolute;left:0px;top:127px;width:26px;height:513px;background:linear-gradient(90deg,#f8f8f8,#f0f0f0);"></div>
<svg style="position:absolute;left:5px;top:131px;" width="16" height="2" viewBox="0 0 16 2"><rect x="0" y="0" width="2" height="2" fill="#b8b8b8"/><rect x="4" y="0" width="2" height="2" fill="#b8b8b8"/><rect x="8" y="0" width="2" height="2" fill="#b8b8b8"/><rect x="12" y="0" width="2" height="2" fill="#b8b8b8"/></svg>
<svg style="position:absolute;left:5px;top:139px;overflow:visible;" width="20" height="20" viewBox="0 0 20 20"><path d="M3 1 L3 13 L6 10 L9 15 L11 14 L8 9 L12 9Z" fill="#f4f4f4" stroke="#909090"/><path d="M18.5 12 V18.5 H12 Z" fill="#f4f46a"/><path d="M18.5 12.5 V18.5 H12.5" fill="none" stroke="#000" stroke-width="1.3"/></svg>
<svg style="position:absolute;left:5px;top:161px;overflow:visible;" width="20" height="20" viewBox="0 0 20 20"><path d="M1 15 L15 1" fill="none" stroke="#000" stroke-width="1" stroke-dasharray="1,2"/><rect x="4" y="10" width="3" height="3" fill="#000080"/><rect x="5" y="11" width="1" height="1" fill="#fff"/><rect x="9" y="5" width="3" height="3" fill="#000080"/><rect x="10" y="6" width="1" height="1" fill="#fff"/><path d="M18.5 12 V18.5 H12 Z" fill="#f4f46a"/><path d="M18.5 12.5 V18.5 H12.5" fill="none" stroke="#000" stroke-width="1.3"/></svg>
<svg style="position:absolute;left:5px;top:183px;overflow:visible;" width="20" height="20" viewBox="0 0 20 20"><circle cx="8" cy="8" r="1.5" fill="#000"/><path d="M18.5 12 V18.5 H12 Z" fill="#f4f46a"/><path d="M18.5 12.5 V18.5 H12.5" fill="none" stroke="#000" stroke-width="1.3"/></svg>
<div style="position:absolute;left:2px;top:202px;width:22px;height:22px;background:linear-gradient(#e4effa,#d6e6f7);border:1px solid #7eaee6;"></div>
<svg style="position:absolute;left:5px;top:205px;overflow:visible;" width="20" height="20" viewBox="0 0 20 20"><path d="M3 13 L13 3" fill="none" stroke="#000" stroke-width="1" /><rect x="2" y="12" width="3" height="3" fill="#000080"/><rect x="3" y="13" width="1" height="1" fill="#fff"/><rect x="12" y="2" width="3" height="3" fill="#000080"/><rect x="13" y="3" width="1" height="1" fill="#fff"/><path d="M18.5 12 V18.5 H12 Z" fill="#f4f46a"/><path d="M18.5 12.5 V18.5 H12.5" fill="none" stroke="#000" stroke-width="1.3"/></svg>
<svg style="position:absolute;left:5px;top:227px;overflow:visible;" width="20" height="20" viewBox="0 0 20 20"><path d="M1.5 1.5 H14.5 V14.5 H1.5Z M4.5 4.5 H11.5 V11.5 H4.5Z" fill="none" stroke="#000" stroke-width="1.3" /><rect x="1" y="1" width="3" height="3" fill="#000080"/><rect x="2" y="2" width="1" height="1" fill="#fff"/><rect x="13" y="13" width="3" height="3" fill="#000080"/><rect x="14" y="14" width="1" height="1" fill="#fff"/><path d="M18.5 12 V18.5 H12 Z" fill="#f4f46a"/><path d="M18.5 12.5 V18.5 H12.5" fill="none" stroke="#000" stroke-width="1.3"/></svg>
<svg style="position:absolute;left:5px;top:249px;overflow:visible;" width="20" height="20" viewBox="0 0 20 20"><path d="M1 12 L12 1 M4 15 L15 4" fill="none" stroke="#000" stroke-width="1" stroke-dasharray="2,1"/><rect x="11" y="1" width="3" height="3" fill="#000080"/><rect x="12" y="2" width="1" height="1" fill="#fff"/><rect x="3" y="13" width="3" height="3" fill="#000080"/><rect x="4" y="14" width="1" height="1" fill="#fff"/><path d="M18.5 12 V18.5 H12 Z" fill="#f4f46a"/><path d="M18.5 12.5 V18.5 H12.5" fill="none" stroke="#000" stroke-width="1.3"/></svg>
<svg style="position:absolute;left:5px;top:271px;overflow:visible;" width="20" height="20" viewBox="0 0 20 20"><circle cx="8" cy="8" r="7" fill="none" stroke="#000"/><rect x="7" y="7" width="3" height="3" fill="#000080"/><rect x="8" y="8" width="1" height="1" fill="#fff"/><rect x="13" y="7" width="3" height="3" fill="#000080"/><rect x="14" y="8" width="1" height="1" fill="#fff"/><path d="M18.5 12 V18.5 H12 Z" fill="#f4f46a"/><path d="M18.5 12.5 V18.5 H12.5" fill="none" stroke="#000" stroke-width="1.3"/></svg>
<svg style="position:absolute;left:5px;top:293px;overflow:visible;" width="20" height="20" viewBox="0 0 20 20"><path d="M2 12 A6 6 0 0 1 14 12" fill="none" stroke="#000" stroke-width="1" /><rect x="1" y="11" width="3" height="3" fill="#000080"/><rect x="2" y="12" width="1" height="1" fill="#fff"/><rect x="7" y="11" width="3" height="3" fill="#000080"/><rect x="8" y="12" width="1" height="1" fill="#fff"/><rect x="13" y="11" width="3" height="3" fill="#000080"/><rect x="14" y="12" width="1" height="1" fill="#fff"/><path d="M18.5 12 V18.5 H12 Z" fill="#f4f46a"/><path d="M18.5 12.5 V18.5 H12.5" fill="none" stroke="#000" stroke-width="1.3"/></svg>
<svg style="position:absolute;left:5px;top:315px;overflow:visible;" width="20" height="20" viewBox="0 0 20 20"><path d="M2 15 Q8 0 14 15" fill="none" stroke="#000" stroke-width="1" /><rect x="1" y="13" width="3" height="3" fill="#000080"/><rect x="2" y="14" width="1" height="1" fill="#fff"/><rect x="2" y="2" width="3" height="3" fill="#000080"/><rect x="3" y="3" width="1" height="1" fill="#fff"/><rect x="12" y="2" width="3" height="3" fill="#000080"/><rect x="13" y="3" width="1" height="1" fill="#fff"/><rect x="13" y="13" width="3" height="3" fill="#000080"/><rect x="14" y="14" width="1" height="1" fill="#fff"/><path d="M18.5 12 V18.5 H12 Z" fill="#f4f46a"/><path d="M18.5 12.5 V18.5 H12.5" fill="none" stroke="#000" stroke-width="1.3"/></svg>
<svg style="position:absolute;left:5px;top:337px;overflow:visible;" width="20" height="20" viewBox="0 0 20 20"><path d="M1.5 5.5 H10.5 V14.5 H1.5Z" fill="#e8e8e8" stroke="#a0a0a0"/><path d="M1.5 5.5 L5.5 1.5 H14.5 V10.5 L10.5 14.5 M10.5 5.5 L14.5 1.5" fill="none" stroke="#a0a0a0" stroke-width="1" /><path d="M18.5 12 V18.5 H12 Z" fill="#f4f46a"/><path d="M18.5 12.5 V18.5 H12.5" fill="none" stroke="#000" stroke-width="1.3"/></svg>
<svg style="position:absolute;left:5px;top:359px;overflow:visible;" width="20" height="20" viewBox="0 0 20 20"><path d="M2 6 L12 2 V12 L2 15Z" fill="#707888" stroke="#202020"/><path d="M2 6 L5 4 L14 2 L12 2Z" fill="#c0c0c0" /><rect x="3" y="13" width="3" height="3" fill="#000080"/><rect x="4" y="14" width="1" height="1" fill="#fff"/><rect x="11" y="10" width="3" height="3" fill="#000080"/><rect x="12" y="11" width="1" height="1" fill="#fff"/><path d="M18.5 12 V18.5 H12 Z" fill="#f4f46a"/><path d="M18.5 12.5 V18.5 H12.5" fill="none" stroke="#000" stroke-width="1.3"/></svg>
<svg style="position:absolute;left:5px;top:381px;overflow:visible;" width="20" height="20" viewBox="0 0 20 20"><path d="M8 1 V15 M1 8 H15" fill="none" stroke="#000" stroke-width="1" /><path d="M8 0 L5 3 H11Z M8 16 L5 13 H11Z M0 8 L3 5 V11Z M16 8 L13 5 V11Z" fill="#000" /><path d="M0 1 H16 M0 15 H16" fill="none" stroke="#606060" stroke-width="1" /><path d="M18.5 12 V18.5 H12 Z" fill="#f4f46a"/><path d="M18.5 12.5 V18.5 H12.5" fill="none" stroke="#000" stroke-width="1.3"/></svg>
<svg style="position:absolute;left:5px;top:403px;overflow:visible;" width="20" height="20" viewBox="0 0 20 20"><text x="0" y="16" font-size="19" font-weight="bold" font-family="Liberation Sans" fill="#000" transform="scale(1.08,1)">A</text><path d="M18.5 12 V18.5 H12 Z" fill="#f4f46a"/><path d="M18.5 12.5 V18.5 H12.5" fill="none" stroke="#000" stroke-width="1.3"/></svg>
<svg style="position:absolute;left:5px;top:425px;overflow:visible;" width="20" height="20" viewBox="0 0 20 20"><path d="M1.5 1.5 H9.5 L12.5 4.5 V9.5 H1.5Z" fill="#fff" stroke="#000"/><path d="M2 2 H6 V6 H2Z" fill="#e00000" /><path d="M5.5 6.5 H14.5 V15.5 H5.5Z" fill="#0000d0" stroke="#000"/><path d="M6 15 L14 7" fill="none" stroke="#8080ff" stroke-width="1" /><path d="M18.5 12 V18.5 H12 Z" fill="#f4f46a"/><path d="M18.5 12.5 V18.5 H12.5" fill="none" stroke="#000" stroke-width="1.3"/></svg>
<svg style="position:absolute;left:5px;top:447px;overflow:visible;" width="20" height="20" viewBox="0 0 20 20"><circle cx="8" cy="8" r="7" fill="none" stroke="#a0a0a0"/><path d="M4 4 L7 7 M12 4 L9 7 M4 12 L7 9 M12 12 L9 9" fill="none" stroke="#a0a0a0" stroke-width="1" /><path d="M7 7 L4 6 L6 4Z" fill="#a0a0a0" /><path d="M18.5 12 V18.5 H12 Z" fill="#f4f46a"/><path d="M18.5 12.5 V18.5 H12.5" fill="none" stroke="#000" stroke-width="1.3"/></svg>
<svg style="position:absolute;left:5px;top:469px;overflow:visible;" width="20" height="20" viewBox="0 0 20 20"><path d="M1.5 2.5 H7.5 V6.5 H1.5Z" fill="#e0e0e0" stroke="#a0a0a0"/><path d="M5 14 L13 6" fill="none" stroke="#a0a0a0" stroke-width="1" stroke-dasharray="2,1"/><path d="M12 4 H15 V7 H12Z M3 12 H6 V15 H3Z" fill="none" stroke="#a0a0a0"/><path d="M18.5 12 V18.5 H12 Z" fill="#f4f46a"/><path d="M18.5 12.5 V18.5 H12.5" fill="none" stroke="#000" stroke-width="1.3"/></svg>
<div style="position:absolute;left:5px;top:489px;width:17px;height:1px;background:#c8c8c8;"></div>
<svg style="position:absolute;left:5px;top:497px;overflow:visible;" width="20" height="20" viewBox="0 0 20 20"><path d="M2 14 L14 2 M5 13 L12 6" fill="none" stroke="#a0a0a0" stroke-width="1" /><path d="M2 13 L5 10 L6 14Z" fill="#a0a0a0" /><path d="M18.5 12 V18.5 H12 Z" fill="#f4f46a"/><path d="M18.5 12.5 V18.5 H12.5" fill="none" stroke="#000" stroke-width="1.3"/></svg>
<svg style="position:absolute;left:5px;top:519px;overflow:visible;" width="20" height="20" viewBox="0 0 20 20"><path d="M1 9 Q2 3 9 3 Q15 4 14 9 Q12 14 5 14 L1 12Z" fill="#d8d8d8" stroke="#a0a0a0"/><path d="M18.5 12 V18.5 H12 Z" fill="#f4f46a"/><path d="M18.5 12.5 V18.5 H12.5" fill="none" stroke="#000" stroke-width="1.3"/></svg>
<svg style="position:absolute;left:5px;top:541px;overflow:visible;" width="20" height="20" viewBox="0 0 20 20"><path d="M2 4 L6 1 L10 5 L6 8Z" fill="#e0e0e0" stroke="#a0a0a0"/><path d="M9 8 h2 v2 h-2z" fill="#a0a0a0" /><path d="M12 11 h2 v2 h-2z" fill="#a0a0a0" /><path d="M5 12 h2 v2 h-2z" fill="#a0a0a0" /><path d="M8 14 h2 v2 h-2z" fill="#a0a0a0" /><path d="M18.5 12 V18.5 H12 Z" fill="#f4f46a"/><path d="M18.5 12.5 V18.5 H12.5" fill="none" stroke="#000" stroke-width="1.3"/></svg>
<svg style="position:absolute;left:5px;top:563px;overflow:visible;" width="20" height="20" viewBox="0 0 20 20"><path d="M6 2 H12 V7 H6Z" fill="#e0e0e0" stroke="#a0a0a0"/><circle cx="5" cy="11" r="4" fill="#e8e8e8" stroke="#a0a0a0"/><path d="M10 10 L14 12" fill="none" stroke="#a0a0a0" stroke-width="1" /></svg>
<div style="position:absolute;left:5px;top:585px;width:17px;height:1px;background:#c8c8c8;"></div>
<svg style="position:absolute;left:5px;top:593px;overflow:visible;" width="20" height="20" viewBox="0 0 20 20"><path d="M3.5 3.5 H12.5 V12.5 H3.5Z" fill="none" stroke="#a0a0a0" stroke-width="1" /><path d="M2.0 2.0 h3 v3 h-3z" fill="#8c8c8c" /><path d="M11.0 2.0 h3 v3 h-3z" fill="#8c8c8c" /><path d="M2.0 11.0 h3 v3 h-3z" fill="#8c8c8c" /><path d="M11.0 11.0 h3 v3 h-3z" fill="#8c8c8c" /><path d="M6.5 2.0 h3 v3 h-3z" fill="#8c8c8c" /></svg>
<div style="position:absolute;left:1px;top:629px;width:25px;height:11px;background:linear-gradient(#d8d8d8,#c4c4c4);"></div>
<svg style="position:absolute;left:7px;top:631px;" width="16" height="8" viewBox="0 0 16 8"><path d="M1 1 L3 3 L5 1 M1 4 L3 6 L5 4" fill="none" stroke="#000"/><rect x="10" y="1" width="1" height="6" fill="#000"/><path d="M12 1 L15 4 L12 7Z" fill="#000"/></svg>
<svg style="position:absolute;left:1109px;top:219px;overflow:visible;" width="16" height="16" viewBox="0 0 16 16"><path d="M4 7 Q6 3 9 5 L13 9 Q14 13 10 13 Q6 13 4 10Z" fill="none" stroke="#000" stroke-width="1" /><path d="M5 5 L9 8" fill="none" stroke="#000" stroke-width="1" /><path d="M4 2 H9" fill="none" stroke="#000" stroke-width="1" stroke-dasharray="1,1"/><text x="12" y="5" font-size="5" fill="#d00020" font-family="Liberation Sans">Y</text><path d="M1 12 L3 14 M3 12 L1 14" fill="none" stroke="#d00020" stroke-width="1" /></svg>
<div style="position:absolute;left:1131px;top:213px;width:29px;height:28px;background:linear-gradient(#e6eef8,#dae6f4);border:1px solid #6aa0e0;"></div>
<svg style="position:absolute;left:1137px;top:219px;overflow:visible;" width="16" height="16" viewBox="0 0 16 16"><rect x="2" y="7" width="3" height="3" fill="#808080"/><rect x="3" y="8" width="1" height="1" fill="#fff"/><path d="M6 8 H12 M10 6 L12 8 L10 10" fill="none" stroke="#000" stroke-width="1" /><rect x="12" y="7" width="3" height="3" fill="#e00010"/><rect x="13" y="8" width="1" height="1" fill="#fff"/></svg>
<div style="position:absolute;left:1159px;top:213px;width:29px;height:28px;background:linear-gradient(#e6eef8,#dae6f4);border:1px solid #6aa0e0;"></div>
<svg style="position:absolute;left:1165px;top:219px;overflow:visible;" width="16" height="16" viewBox="0 0 16 16"><path d="M2 10 L8 4 L15 13" fill="none" stroke="#000" stroke-width="1" /><rect x="6" y="4" width="3" height="3" fill="#e00010"/><rect x="7" y="5" width="1" height="1" fill="#fff"/><path d="M10 1.5 H12.5 V4 H10Z" fill="none" stroke="#404040" stroke-width="1" /></svg>
<svg style="position:absolute;left:1193px;top:219px;overflow:visible;" width="16" height="16" viewBox="0 0 16 16"><path d="M2 14 L14 2" fill="none" stroke="#000" stroke-width="1" /><rect x="4" y="10" width="3" height="3" fill="#e00010"/><rect x="5" y="11" width="1" height="1" fill="#fff"/><rect x="9" y="5" width="3" height="3" fill="#e00010"/><rect x="10" y="6" width="1" height="1" fill="#fff"/></svg>
<div style="position:absolute;left:1215px;top:213px;width:29px;height:28px;background:linear-gradient(#e6eef8,#dae6f4);border:1px solid #6aa0e0;"></div>
<svg style="position:absolute;left:1221px;top:219px;overflow:visible;" width="16" height="16" viewBox="0 0 16 16"><path d="M4 12.5 A6 6 0 1 1 13.5 10" fill="none" stroke="#000" stroke-width="1.2" /><rect x="7" y="7" width="3" height="3" fill="#e00010"/><rect x="8" y="8" width="1" height="1" fill="#fff"/></svg>
<div style="position:absolute;left:1243px;top:213px;width:29px;height:28px;background:linear-gradient(#e6eef8,#dae6f4);border:1px solid #6aa0e0;"></div>
<svg style="position:absolute;left:1249px;top:219px;overflow:visible;" width="16" height="16" viewBox="0 0 16 16"><path d="M1.5 5.5 H10.5 V14.5 H1.5Z M1.5 5.5 L5.5 1.5 H14.5 V10.5 L10.5 14.5 M10.5 5.5 L14.5 1.5 M3.5 7.5 H8.5 V12.5 H3.5Z" fill="none" stroke="#000" stroke-width="1.2" /><rect x="5" y="9" width="3" height="3" fill="#e00010"/><rect x="6" y="10" width="1" height="1" fill="#fff"/></svg>
<svg style="position:absolute;left:1277px;top:219px;overflow:visible;" width="16" height="16" viewBox="0 0 16 16"><path d="M8 1.5 Q11 0 12 3 Q15 4 14 7 Q16 9 13.5 11 Q13 15 9.5 14 Q8 16 6.5 14 Q3 15 2.5 11 Q0 9 2 7 Q1 4 4 3 Q5 0 8 1.5Z" fill="none" stroke="#b00020" stroke-width="1.2" stroke-dasharray="3,1"/><path d="M8 3 V13 M3 8 H13" fill="none" stroke="#000" stroke-width="1" stroke-dasharray="1,1"/></svg>
<div style="position:absolute;left:1299px;top:213px;width:29px;height:28px;background:linear-gradient(#e6eef8,#dae6f4);border:1px solid #6aa0e0;"></div>
<svg style="position:absolute;left:1305px;top:219px;overflow:visible;" width="16" height="16" viewBox="0 0 16 16"><path d="M2 2 L14 14 M14 2 L2 14" fill="none" stroke="#000" stroke-width="1" /><rect x="7" y="7" width="3" height="3" fill="#e00010"/><rect x="8" y="8" width="1" height="1" fill="#fff"/></svg>
<svg style="position:absolute;left:1109px;top:246px;overflow:visible;" width="16" height="16" viewBox="0 0 16 16"><rect x="1" y="1" width="1" height="1" fill="#000"/><rect x="1" y="4" width="1" height="1" fill="#000"/><rect x="1" y="7" width="1" height="1" fill="#000"/><rect x="1" y="10" width="1" height="1" fill="#000"/><rect x="1" y="13" width="1" height="1" fill="#000"/><rect x="4" y="1" width="1" height="1" fill="#000"/><rect x="4" y="4" width="1" height="1" fill="#000"/><rect x="4" y="7" width="1" height="1" fill="#000"/><rect x="4" y="10" width="1" height="1" fill="#000"/><rect x="4" y="13" width="1" height="1" fill="#000"/><rect x="7" y="1" width="1" height="1" fill="#000"/><rect x="7" y="4" width="1" height="1" fill="#000"/><rect x="7" y="7" width="1" height="1" fill="#000"/><rect x="7" y="10" width="1" height="1" fill="#000"/><rect x="7" y="13" width="1" height="1" fill="#000"/><rect x="10" y="1" width="1" height="1" fill="#000"/><rect x="10" y="4" width="1" height="1" fill="#000"/><rect x="10" y="7" width="1" height="1" fill="#000"/><rect x="10" y="10" width="1" height="1" fill="#000"/><rect x="10" y="13" width="1" height="1" fill="#000"/><rect x="13" y="1" width="1" height="1" fill="#000"/><rect x="13" y="4" width="1" height="1" fill="#000"/><rect x="13" y="7" width="1" height="1" fill="#000"/><rect x="13" y="10" width="1" height="1" fill="#000"/><rect x="13" y="13" width="1" height="1" fill="#000"/><rect x="12" y="12" width="3" height="3" fill="#e00010"/><rect x="13" y="13" width="1" height="1" fill="#fff"/></svg>
<svg style="position:absolute;left:1137px;top:246px;overflow:visible;" width="16" height="16" viewBox="0 0 16 16"><path d="M2 8 L6 4 L10 8 L6 12Z M7 8 L12 13" fill="none" stroke="#000" stroke-width="1" /><path d="M10.5 1.5 H13.5 V4.5 H10.5Z" fill="none" stroke="#606060" stroke-width="1" /><rect x="5" y="7" width="3" height="3" fill="#e00010"/><rect x="6" y="8" width="1" height="1" fill="#fff"/></svg>
<svg style="position:absolute;left:1165px;top:246px;overflow:visible;" width="16" height="16" viewBox="0 0 16 16"><path d="M2.5 13.5 L4.5 4.5 H11.5 L13.5 13.5Z" fill="none" stroke="#000" stroke-width="1.2" /><rect x="7" y="9" width="3" height="3" fill="#e00010"/><rect x="8" y="10" width="1" height="1" fill="#fff"/></svg>
<svg style="position:absolute;left:1193px;top:246px;overflow:visible;" width="16" height="16" viewBox="0 0 16 16"><path d="M1 15 Q5 5 15 3 M3 7 L8 13" fill="none" stroke="#000" stroke-width="1" /><rect x="6" y="7" width="3" height="3" fill="#e00010"/><rect x="7" y="8" width="1" height="1" fill="#fff"/></svg>
<svg style="position:absolute;left:1221px;top:246px;overflow:visible;" width="16" height="16" viewBox="0 0 16 16"><path d="M2 13 H14 M8 5 V13" fill="none" stroke="#000" stroke-width="1" stroke-dasharray="1,1"/><path d="M2 13 H14" fill="none" stroke="#000" stroke-width="1" /><rect x="7" y="12" width="3" height="3" fill="#e00010"/><rect x="8" y="13" width="1" height="1" fill="#fff"/><path d="M6 2 L10 5 M10 2 L6 5" fill="none" stroke="#d00020" stroke-width="1.3" /></svg>
<svg style="position:absolute;left:1249px;top:246px;overflow:visible;" width="16" height="16" viewBox="0 0 16 16"><path d="M2 9 H14 M8 5 V15" fill="none" stroke="#000" stroke-width="1" /><rect x="7" y="13" width="3" height="3" fill="#e00010"/><rect x="8" y="14" width="1" height="1" fill="#fff"/><path d="M6 2 L10 5 M10 2 L6 5" fill="none" stroke="#d00020" stroke-width="1.3" /></svg>
<svg style="position:absolute;left:1277px;top:246px;overflow:visible;" width="16" height="16" viewBox="0 0 16 16"><path d="M8 1 V15 M1 8 H15 M3 3 L13 13 M13 3 L3 13" fill="none" stroke="#808080" stroke-width="1" /><path d="M12 2 H15" fill="none" stroke="#d00020" stroke-width="1" /></svg>
<div style="position:absolute;left:1299px;top:240px;width:29px;height:28px;background:linear-gradient(#e6eef8,#dae6f4);border:1px solid #6aa0e0;"></div>
<svg style="position:absolute;left:1305px;top:246px;overflow:visible;" width="16" height="16" viewBox="0 0 16 16"><path d="M1 13 L9 14 L15 9 L8 10Z" fill="#909090" /><path d="M8 1 L5 13 M8 1 L12 11" fill="none" stroke="#000" stroke-width="1" /><path d="M8 4 L11 11 L7 12Z" fill="#d0d0d0" /><rect x="8" y="10" width="3" height="3" fill="#e00010"/><rect x="9" y="11" width="1" height="1" fill="#fff"/></svg>
<div style="position:absolute;left:1103px;top:267px;width:29px;height:28px;background:linear-gradient(#e6eef8,#dae6f4);border:1px solid #6aa0e0;"></div>
<svg style="position:absolute;left:1109px;top:273px;overflow:visible;" width="16" height="16" viewBox="0 0 16 16"><path d="M4.5 10 V5.5 A3.5 3.5 0 0 1 11.5 5.5 V10" fill="none" stroke="#000" stroke-width="3" /><path d="M2 15 L8 12 L14 15" fill="none" stroke="#000" stroke-width="1" /><rect x="7" y="11" width="3" height="3" fill="#e00010"/><rect x="8" y="12" width="1" height="1" fill="#fff"/></svg>
<div style="position:absolute;left:1131px;top:267px;width:29px;height:28px;background:linear-gradient(#e6eef8,#dae6f4);border:1px solid #6aa0e0;"></div>
<svg style="position:absolute;left:1137px;top:273px;overflow:visible;" width="16" height="16" viewBox="0 0 16 16"><path d="M3 2 V14" fill="none" stroke="#000" stroke-width="1" /><path d="M5 2 H11 V8" fill="none" stroke="#000" stroke-width="1" stroke-dasharray="1,1"/><path d="M9 9 L14 14" fill="none" stroke="#000" stroke-width="1" /><rect x="2" y="2" width="3" height="3" fill="#e00010"/><rect x="3" y="3" width="1" height="1" fill="#fff"/><rect x="9" y="9" width="3" height="3" fill="#e00010"/><rect x="10" y="10" width="1" height="1" fill="#fff"/></svg>
<div style="position:absolute;left:1159px;top:267px;width:29px;height:28px;background:linear-gradient(#e6eef8,#dae6f4);border:1px solid #6aa0e0;"></div>
<svg style="position:absolute;left:1165px;top:273px;overflow:visible;" width="16" height="16" viewBox="0 0 16 16"><path d="M2 14 L8 2 L14 14" fill="none" stroke="#000" stroke-width="1" stroke-dasharray="1,1"/><path d="M2 14 L5 8 M14 14 L11 8" fill="none" stroke="#000" stroke-width="1" /><rect x="4" y="8" width="3" height="3" fill="#e00010"/><rect x="5" y="9" width="1" height="1" fill="#fff"/><rect x="10" y="8" width="3" height="3" fill="#e00010"/><rect x="11" y="9" width="1" height="1" fill="#fff"/></svg>
<div style="position:absolute;left:1103px;top:338px;width:29px;height:28px;background:linear-gradient(#e6eef8,#dae6f4);border:1px solid #6aa0e0;"></div>
<svg style="position:absolute;left:1109px;top:344px;overflow:visible;" width="16" height="16" viewBox="0 0 16 16"><path d="M3 13 L13 3" fill="none" stroke="#000" stroke-width="1" /><rect x="2" y="12" width="3" height="3" fill="#000080"/><rect x="3" y="13" width="1" height="1" fill="#fff"/><rect x="12" y="2" width="3" height="3" fill="#000080"/><rect x="13" y="3" width="1" height="1" fill="#fff"/></svg>
<svg style="position:absolute;left:1137px;top:344px;overflow:visible;" width="16" height="16" viewBox="0 0 16 16"><path d="M3 10 L8 4 L12 8 L8 13" fill="none" stroke="#000" stroke-width="1" /><rect x="2" y="9" width="3" height="3" fill="#000080"/><rect x="3" y="10" width="1" height="1" fill="#fff"/><rect x="7" y="3" width="3" height="3" fill="#000080"/><rect x="8" y="4" width="1" height="1" fill="#fff"/><rect x="11" y="7" width="3" height="3" fill="#000080"/><rect x="12" y="8" width="1" height="1" fill="#fff"/><rect x="7" y="12" width="3" height="3" fill="#000080"/><rect x="8" y="13" width="1" height="1" fill="#fff"/></svg>
<svg style="position:absolute;left:1165px;top:344px;overflow:visible;" width="16" height="16" viewBox="0 0 16 16"><circle cx="8" cy="8" r="6" fill="none" stroke="#000" /><rect x="7" y="7" width="3" height="3" fill="#000080"/><rect x="8" y="8" width="1" height="1" fill="#fff"/><rect x="1" y="2" width="3" height="3" fill="#000080"/><rect x="2" y="3" width="1" height="1" fill="#fff"/></svg>
<svg style="position:absolute;left:1193px;top:344px;overflow:visible;" width="16" height="16" viewBox="0 0 16 16"><path d="M3 3 L6 14 L13 9Z" fill="none" stroke="#000" stroke-width="1" /><rect x="2" y="2" width="3" height="3" fill="#000080"/><rect x="3" y="3" width="1" height="1" fill="#fff"/><rect x="5" y="13" width="3" height="3" fill="#000080"/><rect x="6" y="14" width="1" height="1" fill="#fff"/><rect x="12" y="8" width="3" height="3" fill="#000080"/><rect x="13" y="9" width="1" height="1" fill="#fff"/></svg>
<svg style="position:absolute;left:1221px;top:344px;overflow:visible;" width="16" height="16" viewBox="0 0 16 16"><path d="M2.5 2.5 H13.5 V13.5 H2.5Z" fill="none" stroke="#000" stroke-width="1.2" /><rect x="2" y="2" width="3" height="3" fill="#000080"/><rect x="3" y="3" width="1" height="1" fill="#fff"/><rect x="12" y="12" width="3" height="3" fill="#000080"/><rect x="13" y="13" width="1" height="1" fill="#fff"/></svg>
<svg style="position:absolute;left:1249px;top:344px;overflow:visible;" width="16" height="16" viewBox="0 0 16 16"><path d="M2 9 L8 3 L13 8 L7 14Z" fill="none" stroke="#000" stroke-width="1" /><rect x="7" y="2" width="3" height="3" fill="#000080"/><rect x="8" y="3" width="1" height="1" fill="#fff"/><rect x="6" y="13" width="3" height="3" fill="#000080"/><rect x="7" y="14" width="1" height="1" fill="#fff"/><text x="11" y="14" font-size="6" fill="#0000a0" font-weight="bold">k</text></svg>
<svg style="position:absolute;left:1277px;top:344px;overflow:visible;" width="16" height="16" viewBox="0 0 16 16"><path d="M2 11 L8 6 L13 1 M8 6 L13 12" fill="none" stroke="#000" stroke-width="1" /><rect x="7" y="5" width="3" height="3" fill="#606060"/><rect x="8" y="6" width="1" height="1" fill="#fff"/><rect x="12" y="11" width="3" height="3" fill="#606060"/><rect x="13" y="12" width="1" height="1" fill="#fff"/></svg>
<svg style="position:absolute;left:1305px;top:344px;overflow:visible;" width="16" height="16" viewBox="0 0 16 16"><path d="M1 13 L13 1 M3 15 L15 3" fill="none" stroke="#000" stroke-width="1" /><rect x="5" y="7" width="3" height="3" fill="#606060"/><rect x="6" y="8" width="1" height="1" fill="#fff"/><rect x="8" y="9" width="3" height="3" fill="#606060"/><rect x="9" y="10" width="1" height="1" fill="#fff"/></svg>
<svg style="position:absolute;left:1109px;top:371px;overflow:visible;" width="16" height="16" viewBox="0 0 16 16"><circle cx="7" cy="9" r="5" fill="none" stroke="#000" /><path d="M3 2 L15 13" fill="none" stroke="#000" stroke-width="1" /><rect x="7" y="5" width="3" height="3" fill="#606060"/><rect x="8" y="6" width="1" height="1" fill="#fff"/></svg>
<svg style="position:absolute;left:1137px;top:371px;overflow:visible;" width="16" height="16" viewBox="0 0 16 16"><path d="M1 2 Q10 5 5 15 M7 6 L14 13" fill="none" stroke="#000" stroke-width="1" /><rect x="6" y="5" width="3" height="3" fill="#606060"/><rect x="7" y="6" width="1" height="1" fill="#fff"/><rect x="13" y="12" width="3" height="3" fill="#606060"/><rect x="14" y="13" width="1" height="1" fill="#fff"/></svg>
<svg style="position:absolute;left:1165px;top:371px;overflow:visible;" width="16" height="16" viewBox="0 0 16 16"><path d="M2 1 Q12 6 2 15 M7 6 L14 13" fill="none" stroke="#000" stroke-width="1" /><rect x="6" y="5" width="3" height="3" fill="#606060"/><rect x="7" y="6" width="1" height="1" fill="#fff"/><rect x="13" y="12" width="3" height="3" fill="#606060"/><rect x="14" y="13" width="1" height="1" fill="#fff"/></svg>
<svg style="position:absolute;left:1193px;top:371px;overflow:visible;" width="16" height="16" viewBox="0 0 16 16"><path d="M1 2 Q7 2 5 6 L8 9 M13 15 Q13 10 10 9 M2 8 Q9 6 9 14" fill="none" stroke="#000" stroke-width="1" /><rect x="5" y="2" width="3" height="3" fill="#606060"/><rect x="6" y="3" width="1" height="1" fill="#fff"/><rect x="12" y="11" width="3" height="3" fill="#606060"/><rect x="13" y="12" width="1" height="1" fill="#fff"/></svg>
<svg style="position:absolute;left:1221px;top:371px;overflow:visible;" width="16" height="16" viewBox="0 0 16 16"><path d="M1 10 Q6 9 8 14 M15 6 Q10 7 8 1 M3 10 L13 5" fill="none" stroke="#000" stroke-width="1" /><rect x="4" y="9" width="3" height="3" fill="#000080"/><rect x="5" y="10" width="1" height="1" fill="#fff"/><rect x="9" y="5" width="3" height="3" fill="#000080"/><rect x="10" y="6" width="1" height="1" fill="#fff"/></svg>
<svg style="position:absolute;left:1109px;top:441px;overflow:visible;" width="16" height="16" viewBox="0 0 16 16"><circle cx="8" cy="8" r="6.5" fill="none" stroke="#000" /><rect x="7" y="7" width="3" height="3" fill="#000080"/><rect x="8" y="8" width="1" height="1" fill="#fff"/><rect x="13" y="7" width="3" height="3" fill="#000080"/><rect x="14" y="8" width="1" height="1" fill="#fff"/></svg>
<svg style="position:absolute;left:1137px;top:441px;overflow:visible;" width="16" height="16" viewBox="0 0 16 16"><circle cx="7" cy="8" r="6.5" fill="none" stroke="#000" /><circle cx="7" cy="8" r="4" fill="none" stroke="#000" /><rect x="6" y="7" width="3" height="3" fill="#000080"/><rect x="7" y="8" width="1" height="1" fill="#fff"/><rect x="11" y="7" width="3" height="3" fill="#000080"/><rect x="12" y="8" width="1" height="1" fill="#fff"/><rect x="14" y="7" width="3" height="3" fill="#000080"/><rect x="15" y="8" width="1" height="1" fill="#fff"/></svg>
<svg style="position:absolute;left:1165px;top:441px;overflow:visible;" width="16" height="16" viewBox="0 0 16 16"><circle cx="8" cy="8" r="6.5" fill="none" stroke="#000" /><rect x="1" y="7" width="3" height="3" fill="#000080"/><rect x="2" y="8" width="1" height="1" fill="#fff"/><rect x="13" y="7" width="3" height="3" fill="#000080"/><rect x="14" y="8" width="1" height="1" fill="#fff"/></svg>
<svg style="position:absolute;left:1193px;top:441px;overflow:visible;" width="16" height="16" viewBox="0 0 16 16"><circle cx="8" cy="9" r="6" fill="none" stroke="#000" /><rect x="2" y="3" width="3" height="3" fill="#000080"/><rect x="3" y="4" width="1" height="1" fill="#fff"/><rect x="12" y="12" width="3" height="3" fill="#000080"/><rect x="13" y="13" width="1" height="1" fill="#fff"/></svg>
<svg style="position:absolute;left:1221px;top:441px;overflow:visible;" width="16" height="16" viewBox="0 0 16 16"><circle cx="8" cy="9" r="6" fill="none" stroke="#000" /><path d="M1 1.5 H15" fill="none" stroke="#000" stroke-width="1" /><path d="M8 2 V15" fill="none" stroke="#808080" stroke-width="1" stroke-dasharray="1,1"/><rect x="7" y="14" width="3" height="3" fill="#000080"/><rect x="8" y="15" width="1" height="1" fill="#fff"/><rect x="13" y="8" width="3" height="3" fill="#000080"/><rect x="14" y="9" width="1" height="1" fill="#fff"/></svg>
<svg style="position:absolute;left:1249px;top:441px;overflow:visible;" width="16" height="16" viewBox="0 0 16 16"><circle cx="8" cy="8" r="6.5" fill="none" stroke="#000" /><rect x="2" y="3" width="3" height="3" fill="#000080"/><rect x="3" y="4" width="1" height="1" fill="#fff"/><rect x="12" y="3" width="3" height="3" fill="#000080"/><rect x="13" y="4" width="1" height="1" fill="#fff"/><rect x="7" y="14" width="3" height="3" fill="#000080"/><rect x="8" y="15" width="1" height="1" fill="#fff"/></svg>
<svg style="position:absolute;left:1277px;top:441px;overflow:visible;" width="16" height="16" viewBox="0 0 16 16"><circle cx="8" cy="8" r="6" fill="none" stroke="#000" /><path d="M1 3 L5 1 M15 13 L11 15" fill="none" stroke="#000" stroke-width="1" /><rect x="2" y="8" width="3" height="3" fill="#000080"/><rect x="3" y="9" width="1" height="1" fill="#fff"/><rect x="12" y="11" width="3" height="3" fill="#000080"/><rect x="13" y="12" width="1" height="1" fill="#fff"/><rect x="10" y="2" width="3" height="3" fill="#000080"/><rect x="11" y="3" width="1" height="1" fill="#fff"/></svg>
<svg style="position:absolute;left:1305px;top:441px;overflow:visible;" width="16" height="16" viewBox="0 0 16 16"><path d="M1 14 L13 1" fill="none" stroke="#000" stroke-width="1" /><circle cx="9" cy="9" r="4" fill="none" stroke="#000" /><rect x="6" y="10" width="3" height="3" fill="#000080"/><rect x="7" y="11" width="1" height="1" fill="#fff"/><rect x="11" y="7" width="3" height="3" fill="#000080"/><rect x="12" y="8" width="1" height="1" fill="#fff"/><rect x="5" y="14" width="3" height="3" fill="#000080"/><rect x="6" y="15" width="1" height="1" fill="#fff"/><rect x="11" y="14" width="3" height="3" fill="#000080"/><rect x="12" y="15" width="1" height="1" fill="#fff"/></svg>
<svg style="position:absolute;left:1109px;top:468px;overflow:visible;" width="16" height="16" viewBox="0 0 16 16"><ellipse cx="8" cy="9" rx="7" ry="4.5" fill="none" stroke="#000"/><rect x="1" y="4" width="3" height="3" fill="#000080"/><rect x="2" y="5" width="1" height="1" fill="#fff"/><rect x="13" y="11" width="3" height="3" fill="#000080"/><rect x="14" y="12" width="1" height="1" fill="#fff"/><rect x="7" y="8" width="3" height="3" fill="#000080"/><rect x="8" y="9" width="1" height="1" fill="#fff"/></svg>
<svg style="position:absolute;left:1137px;top:468px;overflow:visible;" width="16" height="16" viewBox="0 0 16 16"><path d="M3 15 Q3 6 14 2 Q15 10 3 15 M6 10 L13 5" fill="none" stroke="#000" stroke-width="1" /><rect x="13" y="1" width="3" height="3" fill="#000080"/><rect x="14" y="2" width="1" height="1" fill="#fff"/><rect x="8" y="7" width="3" height="3" fill="#000080"/><rect x="9" y="8" width="1" height="1" fill="#fff"/><rect x="2" y="13" width="3" height="3" fill="#000080"/><rect x="3" y="14" width="1" height="1" fill="#fff"/></svg>
<svg style="position:absolute;left:1165px;top:468px;overflow:visible;" width="16" height="16" viewBox="0 0 16 16"><ellipse cx="8" cy="12" rx="6.5" ry="3.5" fill="none" stroke="#000"/><text x="1" y="6" font-size="6" fill="#0000a0" font-weight="bold" font-family="Liberation Sans">a:b</text></svg>
<svg style="position:absolute;left:1109px;top:539px;overflow:visible;" width="16" height="16" viewBox="0 0 16 16"><path d="M2 11 A6 6 0 0 1 14 11" fill="none" stroke="#000" stroke-width="1" /><rect x="1" y="13" width="3" height="3" fill="#000080"/><rect x="2" y="14" width="1" height="1" fill="#fff"/><rect x="7" y="10" width="3" height="3" fill="#000080"/><rect x="8" y="11" width="1" height="1" fill="#fff"/><rect x="13" y="10" width="3" height="3" fill="#000080"/><rect x="14" y="11" width="1" height="1" fill="#fff"/></svg>
<svg style="position:absolute;left:1137px;top:539px;overflow:visible;" width="16" height="16" viewBox="0 0 16 16"><path d="M2 12 A6 6 0 0 1 14 12 M4.5 12 A3.5 3.5 0 0 1 11.5 12" fill="none" stroke="#000" stroke-width="1" /><rect x="1" y="13" width="3" height="3" fill="#000080"/><rect x="2" y="14" width="1" height="1" fill="#fff"/><rect x="7" y="11" width="3" height="3" fill="#000080"/><rect x="8" y="12" width="1" height="1" fill="#fff"/><rect x="13" y="11" width="3" height="3" fill="#000080"/><rect x="14" y="12" width="1" height="1" fill="#fff"/></svg>
<svg style="position:absolute;left:1165px;top:539px;overflow:visible;" width="16" height="16" viewBox="0 0 16 16"><path d="M2 8 A6 6 0 0 0 14 8 L13 2" fill="none" stroke="#000" stroke-width="1" /><path d="M2 8 H8" fill="none" stroke="#000" stroke-width="1" stroke-dasharray="1,1"/><rect x="1" y="7" width="3" height="3" fill="#000080"/><rect x="2" y="8" width="1" height="1" fill="#fff"/><rect x="13" y="1" width="3" height="3" fill="#000080"/><rect x="14" y="2" width="1" height="1" fill="#fff"/></svg>
<svg style="position:absolute;left:1193px;top:539px;overflow:visible;" width="16" height="16" viewBox="0 0 16 16"><path d="M2 13 A6 6 0 0 1 14 10 M5 3 L11 3" fill="none" stroke="#000" stroke-width="1" /><path d="M4 13 L10 8" fill="none" stroke="#808080" stroke-width="1" stroke-dasharray="1,1"/><rect x="1" y="13" width="3" height="3" fill="#000080"/><rect x="2" y="14" width="1" height="1" fill="#fff"/><rect x="4" y="4" width="3" height="3" fill="#000080"/><rect x="5" y="5" width="1" height="1" fill="#fff"/><rect x="13" y="9" width="3" height="3" fill="#000080"/><rect x="14" y="10" width="1" height="1" fill="#fff"/></svg>
<svg style="position:absolute;left:1221px;top:539px;overflow:visible;" width="16" height="16" viewBox="0 0 16 16"><path d="M1 14 L14 1 M6 8 A4 4 0 1 0 11 11" fill="none" stroke="#000" stroke-width="1" /><path d="M1 1 L6 6" fill="none" stroke="#808080" stroke-width="1" stroke-dasharray="1,1"/><rect x="9" y="10" width="3" height="3" fill="#000080"/><rect x="10" y="11" width="1" height="1" fill="#fff"/><rect x="12" y="9" width="3" height="3" fill="#000080"/><rect x="13" y="10" width="1" height="1" fill="#fff"/></svg>
<svg style="position:absolute;left:1249px;top:539px;overflow:visible;" width="16" height="16" viewBox="0 0 16 16"><text x="0" y="6" font-size="6" fill="#000" font-family="Liberation Sans">1</text><text x="0" y="15" font-size="6" fill="#000" font-family="Liberation Sans">3</text><text x="7" y="11" font-size="6" fill="#000" font-family="Liberation Sans">2</text><path d="M6 2 A5.5 6 0 0 1 6 14" fill="none" stroke="#000" stroke-width="1" /><rect x="5" y="2" width="3" height="3" fill="#000080"/><rect x="6" y="3" width="1" height="1" fill="#fff"/><rect x="11" y="7" width="3" height="3" fill="#000080"/><rect x="12" y="8" width="1" height="1" fill="#fff"/><rect x="5" y="13" width="3" height="3" fill="#000080"/><rect x="6" y="14" width="1" height="1" fill="#fff"/></svg>
<svg style="position:absolute;left:1277px;top:539px;overflow:visible;" width="16" height="16" viewBox="0 0 16 16"><text x="0" y="6" font-size="6" fill="#000" font-family="Liberation Sans">1</text><text x="0" y="15" font-size="6" fill="#000" font-family="Liberation Sans">2</text><text x="7" y="11" font-size="6" fill="#000" font-family="Liberation Sans">3</text><path d="M6 2 A5.5 6 0 0 1 6 14" fill="none" stroke="#000" stroke-width="1" /><rect x="5" y="2" width="3" height="3" fill="#000080"/><rect x="6" y="3" width="1" height="1" fill="#fff"/><rect x="11" y="7" width="3" height="3" fill="#000080"/><rect x="12" y="8" width="1" height="1" fill="#fff"/><rect x="5" y="13" width="3" height="3" fill="#000080"/><rect x="6" y="14" width="1" height="1" fill="#fff"/></svg>
<svg style="position:absolute;left:1305px;top:539px;overflow:visible;" width="16" height="16" viewBox="0 0 16 16"><path d="M4 2 A6 6 0 1 0 13 5 L9 10" fill="none" stroke="#000" stroke-width="1" /><path d="M9 3 L13 5" fill="none" stroke="#808080" stroke-width="1" stroke-dasharray="1,1"/><rect x="5" y="1" width="3" height="3" fill="#000080"/><rect x="6" y="2" width="1" height="1" fill="#fff"/><rect x="13" y="8" width="3" height="3" fill="#000080"/><rect x="14" y="9" width="1" height="1" fill="#fff"/><rect x="2" y="8" width="3" height="3" fill="#000080"/><rect x="3" y="9" width="1" height="1" fill="#fff"/></svg>
<svg style="position:absolute;left:1109px;top:566px;overflow:visible;" width="16" height="16" viewBox="0 0 16 16"><path d="M1 14 L13 2" fill="none" stroke="#000" stroke-width="1" /><circle cx="8" cy="10" r="3.5" fill="none" stroke="#000" /><rect x="4" y="8" width="3" height="3" fill="#000080"/><rect x="5" y="9" width="1" height="1" fill="#fff"/><rect x="9" y="7" width="3" height="3" fill="#000080"/><rect x="10" y="8" width="1" height="1" fill="#fff"/><rect x="7" y="13" width="3" height="3" fill="#000080"/><rect x="8" y="14" width="1" height="1" fill="#fff"/></svg>
<svg style="position:absolute;left:1137px;top:566px;overflow:visible;" width="16" height="16" viewBox="0 0 16 16"><path d="M1 14 L13 2" fill="none" stroke="#000" stroke-width="1" /><circle cx="8" cy="10" r="3.5" fill="none" stroke="#808080" /><rect x="4" y="8" width="3" height="3" fill="#000080"/><rect x="5" y="9" width="1" height="1" fill="#fff"/><rect x="7" y="13" width="3" height="3" fill="#000080"/><rect x="8" y="14" width="1" height="1" fill="#fff"/></svg>
<svg style="position:absolute;left:1165px;top:566px;overflow:visible;" width="16" height="16" viewBox="0 0 16 16"><path d="M3 4 Q0 14 9 13 Q16 12 14 5" fill="none" stroke="#000" stroke-width="1" /><path d="M3 4 L8 8 L14 5" fill="none" stroke="#000" stroke-width="1" stroke-dasharray="1,1"/><rect x="1" y="2" width="3" height="3" fill="#000080"/><rect x="2" y="3" width="1" height="1" fill="#fff"/><rect x="6" y="2" width="3" height="3" fill="#000080"/><rect x="7" y="3" width="1" height="1" fill="#fff"/><rect x="11" y="3" width="3" height="3" fill="#000080"/><rect x="12" y="4" width="1" height="1" fill="#fff"/><rect x="13" y="9" width="3" height="3" fill="#000080"/><rect x="14" y="10" width="1" height="1" fill="#fff"/></svg>
<svg style="position:absolute;left:1193px;top:566px;overflow:visible;" width="16" height="16" viewBox="0 0 16 16"><path d="M2 15 Q4 5 14 2 Q14 12 2 15" fill="none" stroke="#000" stroke-width="1" /><path d="M5 12 L11 6" fill="none" stroke="#808080" stroke-width="1" /><rect x="13" y="1" width="3" height="3" fill="#000080"/><rect x="14" y="2" width="1" height="1" fill="#fff"/><rect x="2" y="13" width="3" height="3" fill="#000080"/><rect x="3" y="14" width="1" height="1" fill="#fff"/><rect x="8" y="12" width="3" height="3" fill="#000080"/><rect x="9" y="13" width="1" height="1" fill="#fff"/></svg>
<svg style="position:absolute;left:1221px;top:566px;overflow:visible;" width="16" height="16" viewBox="0 0 16 16"><path d="M1 14 A7 5 0 0 1 15 14" fill="none" stroke="#000" stroke-width="1" /><text x="1" y="6" font-size="6" fill="#0000a0" font-weight="bold" font-family="Liberation Sans">a:b</text></svg>
<svg style="position:absolute;left:1098px;top:155px;" width="16" height="16" viewBox="0 0 16 16"><path d="M3 1 L3 13 L6 10 L9 15 L11 14 L8 9 L12 9Z" fill="#f4f4f4" stroke="#a0a0a0"/></svg>
<svg style="position:absolute;left:1119px;top:155px;" width="16" height="16" viewBox="0 0 16 16"><path d="M1 14 Q3 4 9 2" fill="none" stroke="#a0a0a0" stroke-width="1" /><path d="M7 6 L7 15 L9 13 L11 16 L12 15 L10 12 L13 12Z" fill="#f4f4f4" stroke="#a0a0a0"/><circle cx="6" cy="5" r="1.5" fill="#a0a0a0"/></svg>
<svg style="position:absolute;left:1141px;top:155px;" width="16" height="16" viewBox="0 0 16 16"><circle cx="8" cy="8" r="6.5" fill="#b0b0b0"/><path d="M3 6 Q8 2 13 6 L11 9 Q8 6 5 9Z" fill="#e0e0e0"/><path d="M13 2 V14" stroke="#a0a0a0"/></svg>
<svg style="position:absolute;left:1268px;top:154px;overflow:visible;" width="18" height="18" viewBox="0 0 18 18"><path d="M1.5 8.5 L8 6.5 L8 15.5 L1.5 14.5Z" fill="#e80010" stroke="#200000"/><path d="M8 6.5 L14.5 8.5 L14.5 13.5 L8 15.5Z" fill="#900000" stroke="#200000"/><path d="M8.5 1.5 L12.5 1.5 L15.5 4.5 L15.5 9.5 L10.5 10.5 L8.5 6Z" fill="#fff" stroke="#000"/><path d="M10 4 H13 M11 6.5 H14" fill="none" stroke="#000" stroke-width="1" /><path d="M1 1 L7 7 M4 0.5 L7 4" fill="none" stroke="#000" stroke-width="1.6" /><path d="M17 13 V17 H13Z" fill="#000"/></svg>
<svg style="position:absolute;left:56px;top:621px;" width="16" height="16" viewBox="0 0 16 16"><circle cx="10" cy="10" r="5" fill="#404040"/><circle cx="9" cy="9" r="2.5" fill="#e0e0e0"/><path d="M2.5 5.5 L5.5 2.5 H12.5 V8 M2.5 5.5 H9.5 V8 M2.5 5.5 V12.5 H6" fill="none" stroke="#000" stroke-width="1.2" /></svg>
<svg style="position:absolute;left:123px;top:620px;" width="14" height="16" viewBox="0 0 14 16"><path d="M1.5 1.5 H8.5 L11.5 4.5 V14.5 H1.5Z" fill="#fff" stroke="#000" stroke-width="1.2"/><text x="3.5" y="12" font-size="7" fill="#000" font-family="Liberation Sans">1</text></svg>
<svg style="position:absolute;left:195px;top:620px;" width="14" height="16" viewBox="0 0 14 16"><path d="M1.5 1.5 H8.5 L11.5 4.5 V14.5 H1.5Z" fill="#fff" stroke="#000" stroke-width="1.2"/><text x="3.5" y="12" font-size="7" fill="#000" font-family="Liberation Sans">2</text></svg>
<svg style="position:absolute;left:265px;top:620px;" width="14" height="16" viewBox="0 0 14 16"><path d="M1.5 1.5 H8.5 L11.5 4.5 V14.5 H1.5Z" fill="#fff" stroke="#000" stroke-width="1.2"/><text x="3.5" y="12" font-size="7" fill="#000" font-family="Liberation Sans">3</text></svg>
<svg style="position:absolute;left:1097px;top:619px;overflow:visible;" width="17" height="17" viewBox="0 0 17 17"><path d="M1.5 8.5 L8 6.5 L8 15.5 L1.5 14.5Z" fill="#e80010" stroke="#200000"/><path d="M8 6.5 L14.5 8.5 L14.5 13.5 L8 15.5Z" fill="#900000" stroke="#200000"/><path d="M8.5 1.5 L12.5 1.5 L15.5 4.5 L15.5 9.5 L10.5 10.5 L8.5 6Z" fill="#fff" stroke="#000"/><path d="M10 4 H13 M11 6.5 H14" fill="none" stroke="#000" stroke-width="1" /><path d="M1 1 L7 7 M4 0.5 L7 4" fill="none" stroke="#000" stroke-width="1.6" /></svg>
<svg style="position:absolute;left:1153px;top:620px;" width="18" height="17" viewBox="0 0 18 17"><path d="M2 5 L8 12 M2 13 L7 8" fill="none" stroke="#000080" stroke-width="1.5" /><path d="M1 3 L5 4 L3 7Z M8 14 L6 10 L10 11Z" fill="#000080" /><text x="9" y="10" font-size="11" font-weight="bold" fill="#000080" font-family="Liberation Sans">?</text></svg>
<svg style="position:absolute;left:9px;top:651px;" width="13" height="12" viewBox="0 0 13 12"><path d="M2 1.5 L11 10.5 M11 1.5 L2 10.5" fill="none" stroke="#8c8c8c" stroke-width="3" /></svg>
<svg style="position:absolute;left:33px;top:650px;" width="16" height="14" viewBox="0 0 16 14"><path d="M0.5 0.5 H15.5 V13.5 H0.5Z" fill="#fff" stroke="#000060"/><path d="M0.5 0.5 H15.5 V3 H0.5Z" fill="#000060" /><path d="M0.5 6.5 H15.5 M0.5 9.5 H15.5 M4.5 3 V13.5 M8 3 V13.5 M11.5 3 V13.5" fill="none" stroke="#000060" stroke-width="1" /></svg>
<svg style="position:absolute;left:63px;top:647px;" width="9" height="10" viewBox="0 0 9 10"><rect x="0" y="4" width="5" height="5" fill="#000080"/><rect x="2" y="6" width="1" height="1" fill="#fff"/><path d="M3.5 4 V2.5 A2 2 0 0 1 7.5 2.5 V3.5" fill="none" stroke="#000080" stroke-width="1.3"/></svg>
<div style="position:absolute;left:73px;top:645px;font-size:12px;line-height:14px;color:#000;white-space:nowrap;line-height:14px;">Length</div>
<svg style="position:absolute;left:144px;top:647px;" width="9" height="10" viewBox="0 0 9 10"><rect x="0" y="4" width="5" height="5" fill="#000080"/><rect x="2" y="6" width="1" height="1" fill="#fff"/><path d="M3.5 4 V2.5 A2 2 0 0 1 7.5 2.5 V3.5" fill="none" stroke="#000080" stroke-width="1.3"/></svg>
<div style="position:absolute;left:154px;top:645px;font-size:12px;line-height:14px;color:#000;white-space:nowrap;line-height:14px;">Angle</div>
<div style="position:absolute;left:62px;top:659px;width:77px;height:16px;background:#fff;border:1px solid #c0c0c0;border-right-color:#e0e0e0;border-bottom-color:#e0e0e0;"></div>
<div style="position:absolute;left:65px;top:661px;font-size:12px;line-height:14px;color:#000;white-space:nowrap;line-height:14px;">0 mm</div>
<div style="position:absolute;left:143px;top:659px;width:76px;height:16px;background:#fff;border:1px solid #c0c0c0;border-right-color:#e0e0e0;border-bottom-color:#e0e0e0;"></div>
<div style="position:absolute;left:146px;top:661px;font-size:12px;line-height:14px;color:#000;white-space:nowrap;line-height:14px;">0</div>
<div style="position:absolute;left:206px;top:660px;width:12px;height:14px;background:linear-gradient(#f4f4f4,#e0e0e0);border-left:1px solid #c8c8c8;"></div>
<svg style="position:absolute;left:208px;top:661px;" width="8" height="12" viewBox="0 0 8 12"><path d="M1 5 L4 2 L7 5Z M1 7 L4 10 L7 7Z" fill="#8090b0"/></svg>
<div style="position:absolute;left:887px;top:690px;font-size:12px;line-height:14px;color:#000;white-space:nowrap;line-height:14px;letter-spacing:-0.8px;">SNAP</div>
<div style="position:absolute;left:920px;top:686px;width:1px;height:20px;background:#d0d0d0;"></div>
<div style="position:absolute;left:925px;top:690px;font-size:12px;line-height:14px;color:#000;white-space:nowrap;line-height:14px;letter-spacing:-0.5px;">GEO</div>
<div style="position:absolute;left:951px;top:686px;width:1px;height:20px;background:#d0d0d0;"></div>
<svg style="position:absolute;left:967px;top:687px;" width="10" height="18" viewBox="0 0 10 18"><rect x="1.5" y="0.5" width="6" height="6" fill="#fff" stroke="#000"/><path d="M4.5 6.5 V8" stroke="#000"/><text x="0" y="16" font-size="10" fill="#000" font-family="Liberation Sans">X</text></svg>
<svg style="position:absolute;left:1063px;top:687px;" width="10" height="18" viewBox="0 0 10 18"><rect x="1.5" y="0.5" width="6" height="6" fill="#fff" stroke="#000"/><path d="M4.5 6.5 V8" stroke="#000"/><text x="0" y="16" font-size="10" fill="#000" font-family="Liberation Sans">Y</text></svg>
<svg style="position:absolute;left:1161px;top:687px;" width="10" height="18" viewBox="0 0 10 18"><rect x="1.5" y="0.5" width="6" height="6" fill="#fff" stroke="#000"/><path d="M4.5 6.5 V8" stroke="#000"/><text x="0" y="16" font-size="10" fill="#000" font-family="Liberation Sans">Z</text></svg>
<div style="position:absolute;left:978px;top:687px;width:73px;height:18px;background:#fff;border:1px solid #7a7a7a;border-right-color:#d8d8d8;border-bottom-color:#d8d8d8;"></div>
<div style="position:absolute;left:980px;top:690px;font-size:12px;line-height:14px;color:#000;white-space:nowrap;line-height:14px;letter-spacing:-0.5px;">146,01 mm</div>
<div style="position:absolute;left:1074px;top:687px;width:73px;height:18px;background:#fff;border:1px solid #7a7a7a;border-right-color:#d8d8d8;border-bottom-color:#d8d8d8;"></div>
<div style="position:absolute;left:1076px;top:690px;font-size:12px;line-height:14px;color:#000;white-space:nowrap;line-height:14px;letter-spacing:-0.5px;">138,44 mm</div>
<div style="position:absolute;left:1171px;top:687px;width:72px;height:18px;background:#fff;border:1px solid #7a7a7a;border-right-color:#d8d8d8;border-bottom-color:#d8d8d8;"></div>
<div style="position:absolute;left:1173px;top:690px;font-size:12px;line-height:14px;color:#a0a0a0;white-space:nowrap;line-height:14px;letter-spacing:-0.5px;">0 mm</div>
<div style="position:absolute;left:1250px;top:686px;width:1px;height:20px;background:#d0d0d0;"></div>
<div style="position:absolute;left:1254px;top:690px;font-size:12px;line-height:14px;color:#000;white-space:nowrap;line-height:14px;">29%</div>
<div style="position:absolute;left:1306px;top:686px;width:1px;height:20px;background:#d0d0d0;"></div>
<div style="position:absolute;left:1312px;top:690px;font-size:12px;line-height:14px;color:#000;white-space:nowrap;line-height:14px;">7:26</div>
</body></html>
